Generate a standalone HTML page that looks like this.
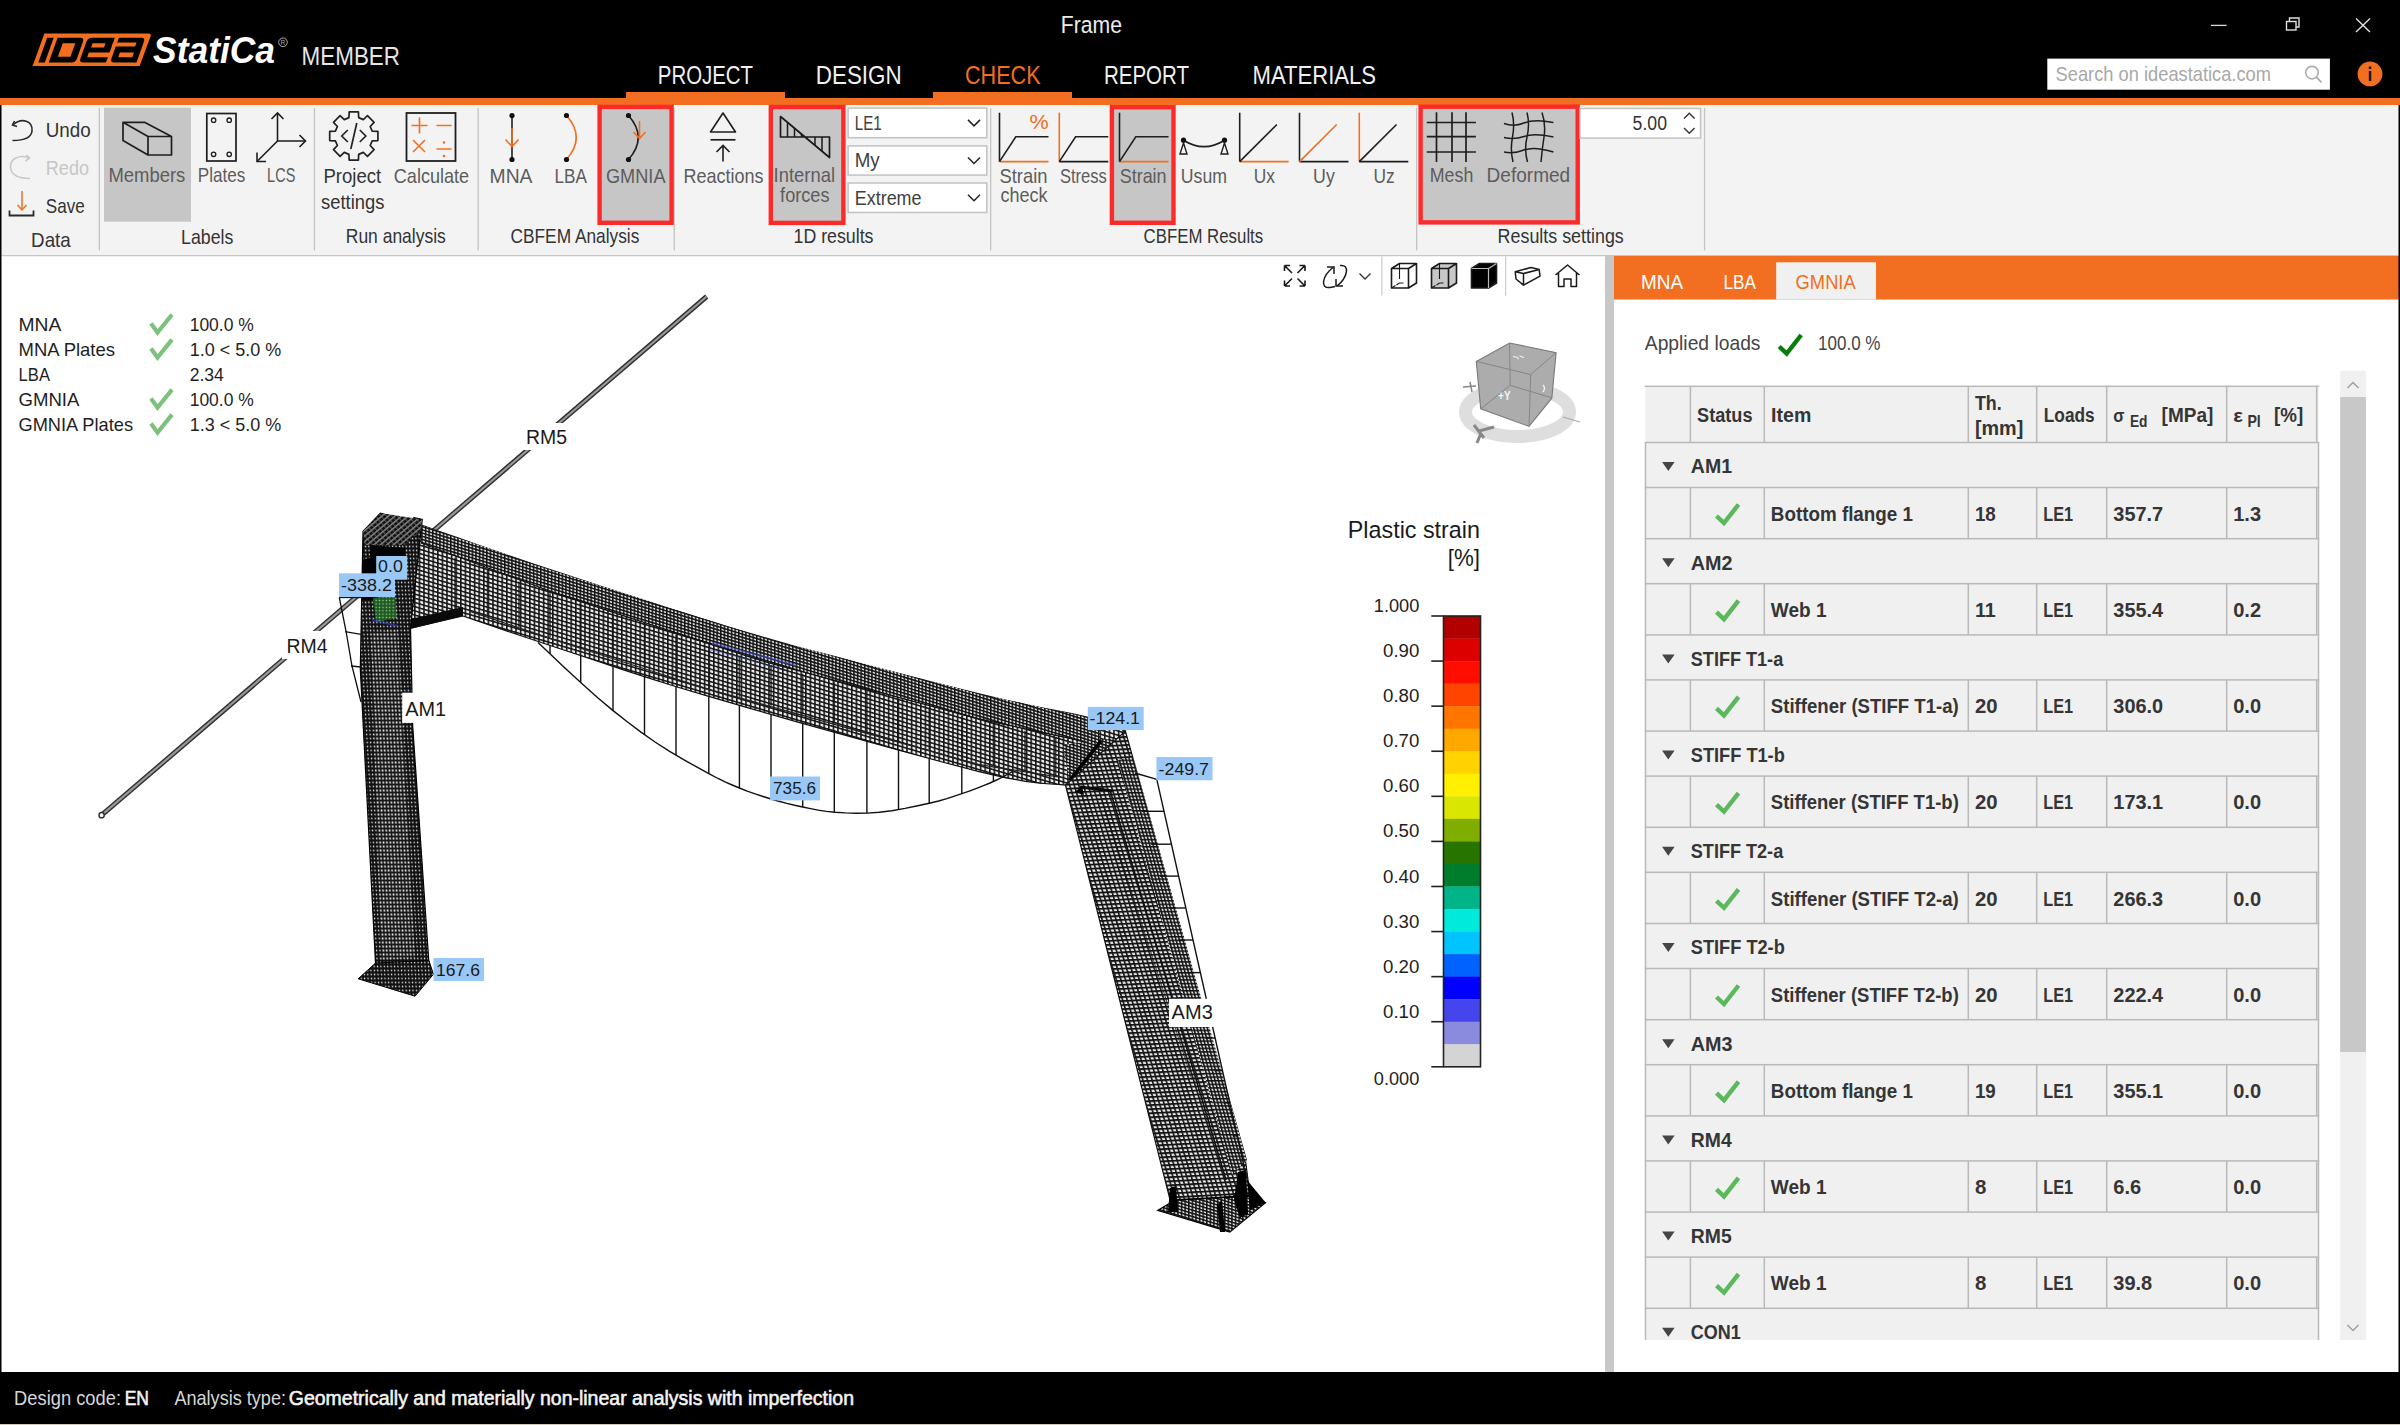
<!DOCTYPE html>
<html><head><meta charset="utf-8"><title>Frame - IDEA StatiCa Member</title>
<style>
html,body{margin:0;padding:0;width:2400px;height:1425px;overflow:hidden;background:#fff;font-family:"Liberation Sans",sans-serif;}
svg{position:absolute;left:0;top:0;display:block}
</style></head>
<body>
<svg width="2400" height="1425" viewBox="0 0 2400 1425">
<rect x="0" y="0" width="2400" height="98" fill="#000" />
<rect x="0" y="98" width="2400" height="7" fill="#f26f21" />
<rect x="626" y="92" width="159" height="6" fill="#f26f21" />
<rect x="933" y="92" width="139" height="6" fill="#f26f21" />
<rect x="1" y="105" width="2398" height="150" fill="#f3f3f3" />
<rect x="1" y="255" width="2398" height="1.5" fill="#c6c6c6" />
<rect x="1" y="256.5" width="1604" height="1115.5" fill="#fff" />
<rect x="1605" y="256" width="9" height="1116" fill="#c8c8c8" />
<rect x="1614" y="256" width="785" height="1116" fill="#fff" />
<rect x="1614" y="256" width="785" height="43.5" fill="#f26f21" />
<rect x="0" y="1372" width="2400" height="53" fill="#000" />
<rect x="0" y="105" width="1.5" height="1267" fill="#000" />
<rect x="2398.5" y="105" width="1.5" height="1267" fill="#000" />
<rect x="0" y="1424" width="2400" height="1" fill="#d2cab6" />
<text x="1060.8" y="32.6" font-family="Liberation Sans" font-size="23.69" font-weight="normal" fill="#ececec" textLength="61.2" lengthAdjust="spacingAndGlyphs" >Frame</text>
<text x="301.6" y="64.7" font-family="Liberation Sans" font-size="25.00" font-weight="normal" fill="#e6e6e6" textLength="98.4" lengthAdjust="spacingAndGlyphs" >MEMBER</text>
<text x="657.8" y="83.8" font-family="Liberation Sans" font-size="25.87" font-weight="normal" fill="#f0f0f0" textLength="95.2" lengthAdjust="spacingAndGlyphs" >PROJECT</text>
<text x="815.8" y="83.8" font-family="Liberation Sans" font-size="25.87" font-weight="normal" fill="#f0f0f0" textLength="85.9" lengthAdjust="spacingAndGlyphs" >DESIGN</text>
<text x="965.0" y="83.8" font-family="Liberation Sans" font-size="25.87" font-weight="normal" fill="#f26f21" textLength="75.6" lengthAdjust="spacingAndGlyphs" >CHECK</text>
<text x="1103.9" y="83.8" font-family="Liberation Sans" font-size="25.87" font-weight="normal" fill="#f0f0f0" textLength="85.1" lengthAdjust="spacingAndGlyphs" >REPORT</text>
<text x="1252.5" y="83.8" font-family="Liberation Sans" font-size="25.87" font-weight="normal" fill="#f0f0f0" textLength="123.5" lengthAdjust="spacingAndGlyphs" >MATERIALS</text>
<rect x="2047.3" y="58.6" width="282.6" height="31.1" fill="#fff" />
<text x="2055.6" y="81.0" font-family="Liberation Sans" font-size="19.48" font-weight="normal" fill="#a8a8a8" textLength="215.4" lengthAdjust="spacingAndGlyphs" >Search on ideastatica.com</text>
<circle cx="2312" cy="72.6" r="6.3" fill="none" stroke="#a8a8a8" stroke-width="1.5"/>
<line x1="2316.5" y1="77.2" x2="2321.5" y2="82.5" stroke="#a8a8a8" stroke-width="1.8" />
<circle cx="2370" cy="73.9" r="12.4" fill="#f26f21"/>
<rect x="2368.8" y="71" width="2.5" height="10" fill="#1a1a1a" />
<rect x="2368.8" y="66.5" width="2.5" height="2.5" fill="#1a1a1a" />
<line x1="2211" y1="25.4" x2="2226.6" y2="25.4" stroke="#d8d8d8" stroke-width="1.3" />
<rect x="2286.5" y="21.5" width="9.5" height="8.5" fill="none" stroke="#e0e0e0" stroke-width="1.4"/>
<path d="M2289.5,21.5 V18 H2299 V27 H2296" fill="none" stroke="#e0e0e0" stroke-width="1.4" />
<line x1="2356" y1="18.5" x2="2370" y2="32" stroke="#e0e0e0" stroke-width="1.4" />
<line x1="2370" y1="18.5" x2="2356" y2="32" stroke="#e0e0e0" stroke-width="1.4" />
<text x="14.1" y="1404.8" font-family="Liberation Sans" font-size="19.48" font-weight="normal" fill="#d6d6d6" textLength="106.9" lengthAdjust="spacingAndGlyphs" >Design code:</text>
<text x="124.7" y="1404.8" font-family="Liberation Sans" font-size="19.48" font-weight="normal" fill="#f4f4f4" textLength="24.3" lengthAdjust="spacingAndGlyphs" stroke="#f4f4f4" stroke-width="0.55">EN</text>
<text x="174.4" y="1404.8" font-family="Liberation Sans" font-size="19.48" font-weight="normal" fill="#d6d6d6" textLength="111.6" lengthAdjust="spacingAndGlyphs" >Analysis type:</text>
<text x="288.8" y="1404.8" font-family="Liberation Sans" font-size="19.48" font-weight="normal" fill="#f4f4f4" textLength="565.2" lengthAdjust="spacingAndGlyphs" stroke="#f4f4f4" stroke-width="0.55">Geometrically and materially non-linear analysis with imperfection</text>
<g transform="translate(0,62.4) skewX(-19.8) translate(0,-62.4)">
<path d="M33.9,33.4 H138 Q141.5,33.4 141.2,37 L140.9,65.9 H33.9 Z" fill="#f26f21"/>
<rect x="38.3" y="37.75" width="6.5" height="24.65" fill="#000" />
<path d="M48.7,37.75 H71.5 Q75.5,37.75 75.5,41.75 V58.4 Q75.5,62.4 71.5,62.4 H48.7 Z" fill="#000"/>
<rect x="55.8" y="43.2" width="12.6" height="13.5" fill="#f26f21" />
<path d="M83,37.75 H106 V62.4 H83 Q79,62.4 79,58.4 V41.75 Q79,37.75 83,37.75 Z" fill="#000"/>
<rect x="85.7" y="43.2" width="12.9" height="4.3" fill="#f26f21" />
<rect x="85.3" y="52.6" width="25" height="4.65" fill="#f26f21" />
<path d="M110,37.75 H132.5 Q136.5,37.75 136.5,41.75 V62.4 H114 Q110,62.4 110,58.4 Z" fill="#000"/>
<rect x="106" y="42.6" width="23.4" height="3.8" fill="#f26f21" />
<rect x="116.3" y="52.4" width="14.1" height="4.85" fill="#f26f21" />
</g>
<text x="153.1" y="62.5" font-family="Liberation Sans" font-size="36.34" font-weight="bold" fill="#fff" textLength="121.9" lengthAdjust="spacingAndGlyphs" font-style="italic">StatiCa</text>
<circle cx="283" cy="42.3" r="4.3" fill="none" stroke="#aaa" stroke-width="1"/>
<text x="280.6" y="45.2" font-family="Liberation Sans" font-size="6.5" fill="#aaa">R</text>
<rect x="98.7" y="108" width="1.3" height="142.5" fill="#c4c4c4" />
<rect x="313.79999999999995" y="108" width="1.3" height="142.5" fill="#c4c4c4" />
<rect x="477.5" y="108" width="1.3" height="142.5" fill="#c4c4c4" />
<rect x="673.6" y="108" width="1.3" height="142.5" fill="#c4c4c4" />
<rect x="990.0" y="108" width="1.3" height="142.5" fill="#c4c4c4" />
<rect x="1416.0" y="108" width="1.3" height="142.5" fill="#c4c4c4" />
<rect x="1703.9" y="108" width="1.3" height="142.5" fill="#c4c4c4" />
<rect x="104" y="107.7" width="87" height="114" fill="#c6c6c6" />
<rect x="597.4" y="104.7" width="76.39999999999998" height="120.3" fill="#fe2a2a" /><rect x="601.8" y="109.10000000000001" width="67.59999999999998" height="111.5" fill="#c6c6c6" />
<rect x="768.6" y="104.8" width="77.0" height="120.3" fill="#fe2a2a" /><rect x="773.0" y="109.2" width="68.2" height="111.5" fill="#c6c6c6" />
<rect x="1109.7" y="105" width="66.0" height="120" fill="#fe2a2a" /><rect x="1114.1000000000001" y="109.4" width="57.2" height="111.2" fill="#c6c6c6" />
<rect x="1418.4" y="104.5" width="161.5" height="120.1" fill="#fe2a2a" /><rect x="1422.8000000000002" y="108.9" width="152.7" height="111.3" fill="#c6c6c6" />
<path d="M14.5,121 L12.5,125 L17,126.5" fill="none" stroke="#2a2a2a" stroke-width="1.6" stroke-linejoin="miter"/>
<path d="M12.8,125 C22,117 33,121 32,131 C31.5,137 26,140.5 12.5,140.5" fill="none" stroke="#2a2a2a" stroke-width="1.6" />
<text x="45.8" y="137.3" font-family="Liberation Sans" font-size="19.48" font-weight="normal" fill="#333" textLength="44.9" lengthAdjust="spacingAndGlyphs" >Undo</text>
<path d="M26,155 L29.5,158 L25.5,161" fill="none" stroke="#c8c8c8" stroke-width="1.6" />
<path d="M29.3,158 C19,154 10,159 10.5,167 C11,174 16,178.5 30,178.5" fill="none" stroke="#c8c8c8" stroke-width="1.6" />
<text x="45.8" y="174.7" font-family="Liberation Sans" font-size="19.48" font-weight="normal" fill="#c6c6c6" textLength="43.2" lengthAdjust="spacingAndGlyphs" >Redo</text>
<line x1="22" y1="191" x2="22" y2="209.5" stroke="#f26f21" stroke-width="1.5" />
<path d="M17.5,205 L22,210 L26.5,205" fill="none" stroke="#f26f21" stroke-width="1.5" />
<path d="M9.5,210.5 V215.5 H33.5 V210.5" fill="none" stroke="#2a2a2a" stroke-width="1.8" />
<text x="45.8" y="212.7" font-family="Liberation Sans" font-size="19.48" font-weight="normal" fill="#333" textLength="38.9" lengthAdjust="spacingAndGlyphs" >Save</text>
<text x="31.1" y="247.3" font-family="Liberation Sans" font-size="19.48" font-weight="normal" fill="#333" textLength="39.6" lengthAdjust="spacingAndGlyphs" >Data</text>
<path d="M123,122.3 L144.5,122.3 L171.5,136.5 L171.5,155 L148,155 L123,140.5 Z M123,122.3 L148,136.5 L171.5,136.5 M148,136.5 L148,155" fill="none" stroke="#1e1e1e" stroke-width="1.7" stroke-linejoin="round"/>
<text x="108.4" y="182.0" font-family="Liberation Sans" font-size="19.48" font-weight="normal" fill="#5c5c5c" textLength="76.9" lengthAdjust="spacingAndGlyphs" >Members</text>
<rect x="206.8" y="113.5" width="29.2" height="47.5" fill="none" stroke="#1e1e1e" stroke-width="1.7"/>
<circle cx="213.6" cy="120.2" r="2.2" fill="none" stroke="#1e1e1e" stroke-width="1.3"/>
<circle cx="229.2" cy="120.2" r="2.2" fill="none" stroke="#1e1e1e" stroke-width="1.3"/>
<circle cx="213.6" cy="154.3" r="2.2" fill="none" stroke="#1e1e1e" stroke-width="1.3"/>
<circle cx="229.2" cy="154.3" r="2.2" fill="none" stroke="#1e1e1e" stroke-width="1.3"/>
<text x="197.8" y="182.0" font-family="Liberation Sans" font-size="19.48" font-weight="normal" fill="#5c5c5c" textLength="47.5" lengthAdjust="spacingAndGlyphs" >Plates</text>
<path d="M277.5,113.5 V141 H305 M277.5,141 L257.5,161" fill="none" stroke="#1e1e1e" stroke-width="1.6" />
<path d="M271.5,119 L277.5,113 L283.5,119 M299.5,135 L305.5,141 L299.5,147 M257,152.5 V161.5 H266" fill="none" stroke="#1e1e1e" stroke-width="1.6" />
<text x="267.1" y="182.0" font-family="Liberation Sans" font-size="19.48" font-weight="normal" fill="#5c5c5c" textLength="28.2" lengthAdjust="spacingAndGlyphs" >LCS</text>
<text x="181.1" y="244.0" font-family="Liberation Sans" font-size="19.48" font-weight="normal" fill="#333" textLength="52.2" lengthAdjust="spacingAndGlyphs" >Labels</text>
<polygon points="377.9,131.4 377.9,140.6 372.2,140.9 370.2,145.5 374.1,149.7 367.5,156.3 363.3,152.4 358.7,154.4 358.4,160.1 349.2,160.1 348.9,154.4 344.3,152.4 340.1,156.3 333.5,149.7 337.4,145.5 335.4,140.9 329.7,140.6 329.7,131.4 335.4,131.1 337.4,126.5 333.5,122.3 340.1,115.7 344.3,119.6 348.9,117.6 349.2,111.9 358.4,111.9 358.7,117.6 363.3,119.6 367.5,115.7 374.1,122.3 370.2,126.5 372.2,131.1" fill="none" stroke="#222" stroke-width="1.7" stroke-linejoin="round"/>
<path d="M347.8,130 L341.8,136 L347.8,142 M359.8,130 L365.8,136 L359.8,142 M356.8,123 L350.8,149" fill="none" stroke="#222" stroke-width="1.7" />
<text x="323.4" y="183.0" font-family="Liberation Sans" font-size="19.48" font-weight="normal" fill="#333" textLength="57.8" lengthAdjust="spacingAndGlyphs" >Project</text>
<text x="321.0" y="208.5" font-family="Liberation Sans" font-size="19.48" font-weight="normal" fill="#333" textLength="63.4" lengthAdjust="spacingAndGlyphs" >settings</text>
<rect x="406.5" y="113" width="49" height="48" fill="none" stroke="#1e1e1e" stroke-width="1.8"/>
<path d="M419.5,117.5 V133.5 M411.5,125.5 H427.5 M436.5,125.5 H451.5 M413,140 L425,152 M425,140 L413,152 M436.5,149 H451.5" fill="none" stroke="#f26f21" stroke-width="1.6" />
<circle cx="444" cy="142.5" r="1.3" fill="#f26f21"/><circle cx="444" cy="156" r="1.3" fill="#f26f21"/>
<text x="393.8" y="182.5" font-family="Liberation Sans" font-size="19.48" font-weight="normal" fill="#5c5c5c" textLength="75.3" lengthAdjust="spacingAndGlyphs" >Calculate</text>
<text x="345.8" y="243.3" font-family="Liberation Sans" font-size="19.48" font-weight="normal" fill="#333" textLength="100.0" lengthAdjust="spacingAndGlyphs" >Run analysis</text>
<line x1="512" y1="115.5" x2="512" y2="159.5" stroke="#1e1e1e" stroke-width="1.6" />
<line x1="512" y1="128" x2="512" y2="146" stroke="#f26f21" stroke-width="1.6" />
<path d="M505.5,139.5 L512,146.5 L518.5,139.5" fill="none" stroke="#f26f21" stroke-width="1.6" />
<circle cx="512" cy="115.5" r="2.6" fill="#111"/><circle cx="512" cy="159.5" r="2.6" fill="#111"/>
<text x="489.6" y="182.5" font-family="Liberation Sans" font-size="19.48" font-weight="normal" fill="#5c5c5c" textLength="42.9" lengthAdjust="spacingAndGlyphs" >MNA</text>
<path d="M566.5,115.5 Q586,137.5 566.5,159.5" fill="none" stroke="#f26f21" stroke-width="1.6" />
<circle cx="566.5" cy="115.5" r="2.6" fill="#111"/><circle cx="566.5" cy="159.5" r="2.6" fill="#111"/>
<text x="554.5" y="182.5" font-family="Liberation Sans" font-size="19.48" font-weight="normal" fill="#5c5c5c" textLength="32.5" lengthAdjust="spacingAndGlyphs" >LBA</text>
<path d="M628.5,115.5 Q648,137.5 628.5,159.5" fill="none" stroke="#1e1e1e" stroke-width="1.6" />
<circle cx="628.5" cy="115.5" r="2.6" fill="#111"/><circle cx="628.5" cy="159.5" r="2.6" fill="#111"/>
<path d="M639.5,121 V138 M633.5,132 L639.5,138.5 L645.5,132" fill="none" stroke="#f26f21" stroke-width="1.6" />
<text x="606.0" y="182.5" font-family="Liberation Sans" font-size="19.48" font-weight="normal" fill="#5c5c5c" textLength="59.5" lengthAdjust="spacingAndGlyphs" >GMNIA</text>
<text x="510.5" y="243.3" font-family="Liberation Sans" font-size="19.48" font-weight="normal" fill="#333" textLength="128.8" lengthAdjust="spacingAndGlyphs" >CBFEM Analysis</text>
<path d="M710.5,132 L723,113 L735.5,132 Z" fill="none" stroke="#1e1e1e" stroke-width="1.6" stroke-linejoin="round"/>
<line x1="710.5" y1="139.8" x2="735.5" y2="139.8" stroke="#1e1e1e" stroke-width="1.7" />
<path d="M723,161.5 V146.5 M716.5,152 L723,145.5 L729.5,152" fill="none" stroke="#1e1e1e" stroke-width="1.6" />
<text x="683.5" y="182.5" font-family="Liberation Sans" font-size="19.48" font-weight="normal" fill="#5c5c5c" textLength="80.0" lengthAdjust="spacingAndGlyphs" >Reactions</text>
<path d="M780.5,116.5 L829.5,157.5 V137 H780.5 Z" fill="none" stroke="#1a1a1a" stroke-width="1.7" stroke-linejoin="round"/>
<path d="M787.5,122.5 V137 M794.5,128.3 V137 M801.5,134 V137 M815,145.3 V137 M822,151.2 V137" fill="none" stroke="#1a1a1a" stroke-width="1.5" />
<text x="773.6" y="181.8" font-family="Liberation Sans" font-size="19.48" font-weight="normal" fill="#5c5c5c" textLength="61.4" lengthAdjust="spacingAndGlyphs" >Internal</text>
<text x="780.1" y="201.7" font-family="Liberation Sans" font-size="19.48" font-weight="normal" fill="#5c5c5c" textLength="49.4" lengthAdjust="spacingAndGlyphs" >forces</text>
<rect x="848.1" y="108.1" width="138.7" height="29.599999999999994" fill="#fff" stroke="#c2c2c2" stroke-width="1.5"/>
<text x="854.7" y="129.6" font-family="Liberation Sans" font-size="19.48" font-weight="normal" fill="#404040" textLength="27.0" lengthAdjust="spacingAndGlyphs" >LE1</text>
<path d="M968,119.89999999999999 L974,125.89999999999999 L980,119.89999999999999" fill="none" stroke="#222" stroke-width="1.5" />
<rect x="848.1" y="145.9" width="138.7" height="29.19999999999999" fill="#fff" stroke="#c2c2c2" stroke-width="1.5"/>
<text x="854.7" y="167.4" font-family="Liberation Sans" font-size="19.48" font-weight="normal" fill="#404040" textLength="25.0" lengthAdjust="spacingAndGlyphs" >My</text>
<path d="M968,157.5 L974,163.5 L980,157.5" fill="none" stroke="#222" stroke-width="1.5" />
<rect x="848.1" y="183.0" width="138.7" height="29.5" fill="#fff" stroke="#c2c2c2" stroke-width="1.5"/>
<text x="854.7" y="204.8" font-family="Liberation Sans" font-size="19.48" font-weight="normal" fill="#404040" textLength="66.9" lengthAdjust="spacingAndGlyphs" >Extreme</text>
<path d="M968,194.75 L974,200.75 L980,194.75" fill="none" stroke="#222" stroke-width="1.5" />
<text x="793.5" y="243.0" font-family="Liberation Sans" font-size="19.48" font-weight="normal" fill="#333" textLength="80.0" lengthAdjust="spacingAndGlyphs" >1D results</text>
<line x1="999.5" y1="112.7" x2="999.5" y2="161.6" stroke="#1e1e1e" stroke-width="1.6" />
<line x1="999.5" y1="161.6" x2="1048.5" y2="161.6" stroke="#f26f21" stroke-width="1.6" />
<polyline points="999.5,161.6 1015.8,136.8 1048.5,136.8" fill="none" stroke="#1e1e1e" stroke-width="1.6" />
<text x="1029.4" y="129.0" font-family="Liberation Sans" font-size="19.50" font-weight="normal" fill="#f26f21" textLength="19.2" lengthAdjust="spacingAndGlyphs" >%</text>
<text x="999.5" y="182.5" font-family="Liberation Sans" font-size="19.48" font-weight="normal" fill="#5c5c5c" textLength="48.0" lengthAdjust="spacingAndGlyphs" >Strain</text>
<text x="1000.4" y="202.4" font-family="Liberation Sans" font-size="19.48" font-weight="normal" fill="#5c5c5c" textLength="47.1" lengthAdjust="spacingAndGlyphs" >check</text>
<line x1="1059.3" y1="112.7" x2="1059.3" y2="161.6" stroke="#f26f21" stroke-width="1.6" />
<line x1="1059.3" y1="161.6" x2="1108.3" y2="161.6" stroke="#1e1e1e" stroke-width="1.6" />
<polyline points="1059.3,161.6 1075.6,136.8 1108.3,136.8" fill="none" stroke="#1e1e1e" stroke-width="1.6" />
<text x="1059.9" y="182.5" font-family="Liberation Sans" font-size="19.48" font-weight="normal" fill="#5c5c5c" textLength="46.9" lengthAdjust="spacingAndGlyphs" >Stress</text>
<line x1="1119.5" y1="112.7" x2="1119.5" y2="161.6" stroke="#1e1e1e" stroke-width="1.6" />
<line x1="1119.5" y1="161.6" x2="1168.5" y2="161.6" stroke="#f26f21" stroke-width="1.6" />
<polyline points="1119.5,161.6 1135.8,136.8 1168.5,136.8" fill="none" stroke="#1e1e1e" stroke-width="1.6" />
<text x="1119.7" y="182.5" font-family="Liberation Sans" font-size="19.48" font-weight="normal" fill="#5c5c5c" textLength="46.9" lengthAdjust="spacingAndGlyphs" >Strain</text>
<path d="M1183.5,140.2 Q1204,153 1224.5,140.2" fill="none" stroke="#1e1e1e" stroke-width="1.6" />
<circle cx="1183.5" cy="140.2" r="2.6" fill="#111"/><circle cx="1224.5" cy="140.2" r="2.6" fill="#111"/>
<path d="M1183.5,143 L1180,154 H1187 Z M1224.5,143 L1221,154 H1228 Z" fill="none" stroke="#1e1e1e" stroke-width="1.4" />
<text x="1180.8" y="182.5" font-family="Liberation Sans" font-size="19.48" font-weight="normal" fill="#5c5c5c" textLength="46.2" lengthAdjust="spacingAndGlyphs" >Usum</text>
<line x1="1239.7" y1="112.7" x2="1239.7" y2="161.6" stroke="#1e1e1e" stroke-width="1.6" />
<line x1="1239.7" y1="161.6" x2="1288.7" y2="161.6" stroke="#f26f21" stroke-width="1.6" />
<line x1="1239.7" y1="161.6" x2="1276.9" y2="124.5" stroke="#1e1e1e" stroke-width="1.6" />
<text x="1253.8" y="182.5" font-family="Liberation Sans" font-size="19.48" font-weight="normal" fill="#5c5c5c" textLength="21.2" lengthAdjust="spacingAndGlyphs" >Ux</text>
<line x1="1299.5" y1="112.7" x2="1299.5" y2="161.6" stroke="#1e1e1e" stroke-width="1.6" />
<line x1="1299.5" y1="161.6" x2="1348.5" y2="161.6" stroke="#1e1e1e" stroke-width="1.6" />
<line x1="1299.5" y1="161.6" x2="1336.7" y2="124.5" stroke="#f26f21" stroke-width="1.6" />
<text x="1313.1" y="182.5" font-family="Liberation Sans" font-size="19.48" font-weight="normal" fill="#5c5c5c" textLength="21.7" lengthAdjust="spacingAndGlyphs" >Uy</text>
<line x1="1359.3" y1="112.7" x2="1359.3" y2="161.6" stroke="#f26f21" stroke-width="1.6" />
<line x1="1359.3" y1="161.6" x2="1408.3" y2="161.6" stroke="#1e1e1e" stroke-width="1.6" />
<line x1="1359.3" y1="161.6" x2="1396.5" y2="124.5" stroke="#1e1e1e" stroke-width="1.6" />
<text x="1373.4" y="182.5" font-family="Liberation Sans" font-size="19.48" font-weight="normal" fill="#5c5c5c" textLength="21.2" lengthAdjust="spacingAndGlyphs" >Uz</text>
<text x="1143.6" y="243.2" font-family="Liberation Sans" font-size="19.48" font-weight="normal" fill="#333" textLength="119.6" lengthAdjust="spacingAndGlyphs" >CBFEM Results</text>
<line x1="1436.5" y1="112.3" x2="1436.5" y2="162" stroke="#1e1e1e" stroke-width="1.7" />
<line x1="1452" y1="112.3" x2="1452" y2="162" stroke="#1e1e1e" stroke-width="1.7" />
<line x1="1466" y1="112.3" x2="1466" y2="162" stroke="#1e1e1e" stroke-width="1.7" />
<line x1="1426.8" y1="122.5" x2="1475.9" y2="122.5" stroke="#1e1e1e" stroke-width="1.7" />
<line x1="1426.8" y1="136.6" x2="1475.9" y2="136.6" stroke="#1e1e1e" stroke-width="1.7" />
<line x1="1426.8" y1="152" x2="1475.9" y2="152" stroke="#1e1e1e" stroke-width="1.7" />
<path d="M1504,123.5 Q1514,127 1524,123 T1553.4,122.5 M1504,137.5 Q1514,140 1524,136.5 T1553.4,137 M1504,152 Q1514,154 1524,150 T1553.4,152 M1512,112.5 Q1515,124 1512.5,137 T1513,162 M1527,112.5 Q1530,124 1527,137 T1527.5,162 M1542,112.5 Q1546,124 1544,137 T1541,162" fill="none" stroke="#1e1e1e" stroke-width="1.5" />
<text x="1429.8" y="182.0" font-family="Liberation Sans" font-size="19.48" font-weight="normal" fill="#5c5c5c" textLength="43.5" lengthAdjust="spacingAndGlyphs" >Mesh</text>
<text x="1486.6" y="182.0" font-family="Liberation Sans" font-size="19.48" font-weight="normal" fill="#5c5c5c" textLength="83.6" lengthAdjust="spacingAndGlyphs" >Deformed</text>
<rect x="1580" y="108.5" width="120.6" height="29.6" fill="#fff" stroke="#c2c2c2" stroke-width="1.5"/>
<text x="1632.6" y="129.7" font-family="Liberation Sans" font-size="19.48" font-weight="normal" fill="#333" textLength="34.4" lengthAdjust="spacingAndGlyphs" >5.00</text>
<path d="M1684,118.5 L1689.3,113.3 L1694.6,118.5 M1684,128 L1689.3,133.3 L1694.6,128" fill="none" stroke="#333" stroke-width="1.4" />
<text x="1497.6" y="243.4" font-family="Liberation Sans" font-size="19.48" font-weight="normal" fill="#333" textLength="126.2" lengthAdjust="spacingAndGlyphs" >Results settings</text>
<rect x="1381.2" y="256.5" width="1.3" height="39" fill="#d0d0d0" />
<rect x="1505" y="256.5" width="1.3" height="39" fill="#d0d0d0" />
<path d="M1284.5,265.5 L1292,273 M1284.5,265.5 H1290 M1284.5,265.5 V271 M1305,265.5 L1297.5,273 M1305,265.5 H1299.5 M1305,265.5 V271 M1284.5,286 L1292,278.5 M1284.5,286 H1290 M1284.5,286 V280.5 M1305,286 L1297.5,278.5 M1305,286 H1299.5 M1305,286 V280.5" fill="none" stroke="#1a1a1a" stroke-width="1.6" />
<path d="M1333,267.5 C1322,276 1320,289 1330,287.5 C1333,287 1335,286.5 1335,286.5" fill="none" stroke="#1a1a1a" stroke-width="1.5" />
<path d="M1327,267 H1334 V274" fill="none" stroke="#1a1a1a" stroke-width="1.5" />
<path d="M1337,286 C1348,277 1350,264 1340,265.5" fill="none" stroke="#1a1a1a" stroke-width="1.5" />
<path d="M1343,286 H1336 V279" fill="none" stroke="#1a1a1a" stroke-width="1.5" />
<path d="M1359.5,273.5 L1365,279 L1370.5,273.5" fill="none" stroke="#333" stroke-width="1.3" />
<path d="M1391.5,268.5 H1408.5 V288 H1391.5 Z M1391.5,268.5 L1399.5,263.5 H1416.5 V283 L1408.5,288 M1408.5,268.5 L1416.5,263.5" fill="none" stroke="#1a1a1a" stroke-width="1.6" stroke-linejoin="round"/>
<path d="M1399.5,263.5 V279 M1399.5,283 H1403.5 M1391.5,288 L1395.5,285.5 M1399.5,283 L1396.5,285" fill="none" stroke="#1a1a1a" stroke-width="1.1" />
<polygon points="1431.5,268.5 1439.5,263.5 1456.5,263.5 1456.5,283.0 1448.5,288.0 1431.5,288.0" fill="#c8c8c8" stroke="none" stroke-width="1" />
<path d="M1431.5,268.5 H1448.5 V288 H1431.5 Z M1431.5,268.5 L1439.5,263.5 H1456.5 V283 L1448.5,288 M1448.5,268.5 L1456.5,263.5" fill="none" stroke="#1a1a1a" stroke-width="1.6" stroke-linejoin="round"/>
<path d="M1439.5,263.5 V279 M1439.5,283 H1443.5 M1431.5,288 L1435.5,285.5 M1439.5,283 L1436.5,285" fill="none" stroke="#1a1a1a" stroke-width="1.1" />
<polygon points="1471.5,268.5 1479.5,263.5 1496.5,263.5 1496.5,283.0 1488.5,288.0 1471.5,288.0" fill="#000" stroke="#1a1a1a" stroke-width="1.6" stroke-linejoin="round"/>
<path d="M1471.5,268.5 H1488.5 V288 M1488.5,268.5 L1496.5,263.5" fill="none" stroke="#bbb" stroke-width="1.2" />
<path d="M1515.2,271.7 L1516,279 L1523.5,285.2 L1540,276.2 L1539.2,269.5 L1531,267.5 Z M1515.2,271.7 L1523.5,273.5 L1539.2,269.5 M1523.5,273.5 V285.2" fill="none" stroke="#1a1a1a" stroke-width="1.5" stroke-linejoin="round"/>
<path d="M1555.5,275 L1567.5,265 L1579.5,275 M1558.5,272.5 V286.5 H1564 V279 H1571 V286.5 H1576.5 V272.5" fill="none" stroke="#1a1a1a" stroke-width="1.5" stroke-linejoin="round"/>
<text x="18.5" y="330.6" font-family="Liberation Sans" font-size="19.04" font-weight="normal" fill="#1f1f1f" textLength="42.8" lengthAdjust="spacingAndGlyphs" >MNA</text>
<text x="189.7" y="330.6" font-family="Liberation Sans" font-size="19.04" font-weight="normal" fill="#1f1f1f" textLength="64.1" lengthAdjust="spacingAndGlyphs" >100.0 %</text>
<path d="M151,323.6 L157.5,332.6 L172,314.6" fill="none" stroke="#7cc17c" stroke-width="4.2" stroke-linejoin="miter" stroke-linecap="butt"/>
<text x="18.5" y="355.6" font-family="Liberation Sans" font-size="19.04" font-weight="normal" fill="#1f1f1f" textLength="96.5" lengthAdjust="spacingAndGlyphs" >MNA Plates</text>
<text x="189.7" y="355.6" font-family="Liberation Sans" font-size="19.04" font-weight="normal" fill="#1f1f1f" textLength="91.6" lengthAdjust="spacingAndGlyphs" >1.0 &lt; 5.0 %</text>
<path d="M151,348.6 L157.5,357.6 L172,339.6" fill="none" stroke="#7cc17c" stroke-width="4.2" stroke-linejoin="miter" stroke-linecap="butt"/>
<text x="18.5" y="380.6" font-family="Liberation Sans" font-size="19.04" font-weight="normal" fill="#1f1f1f" textLength="31.5" lengthAdjust="spacingAndGlyphs" >LBA</text>
<text x="189.7" y="380.6" font-family="Liberation Sans" font-size="19.04" font-weight="normal" fill="#1f1f1f" textLength="34.1" lengthAdjust="spacingAndGlyphs" >2.34</text>
<text x="18.5" y="405.6" font-family="Liberation Sans" font-size="19.04" font-weight="normal" fill="#1f1f1f" textLength="60.9" lengthAdjust="spacingAndGlyphs" >GMNIA</text>
<text x="189.7" y="405.6" font-family="Liberation Sans" font-size="19.04" font-weight="normal" fill="#1f1f1f" textLength="64.1" lengthAdjust="spacingAndGlyphs" >100.0 %</text>
<path d="M151,398.6 L157.5,407.6 L172,389.6" fill="none" stroke="#7cc17c" stroke-width="4.2" stroke-linejoin="miter" stroke-linecap="butt"/>
<text x="18.5" y="430.6" font-family="Liberation Sans" font-size="19.04" font-weight="normal" fill="#1f1f1f" textLength="114.5" lengthAdjust="spacingAndGlyphs" >GMNIA Plates</text>
<text x="189.7" y="430.6" font-family="Liberation Sans" font-size="19.04" font-weight="normal" fill="#1f1f1f" textLength="91.6" lengthAdjust="spacingAndGlyphs" >1.3 &lt; 5.0 %</text>
<path d="M151,423.6 L157.5,432.6 L172,414.6" fill="none" stroke="#7cc17c" stroke-width="4.2" stroke-linejoin="miter" stroke-linecap="butt"/>
<text x="1347.8" y="538.0" font-family="Liberation Sans" font-size="24.27" font-weight="normal" fill="#1a1a1a" textLength="132.2" lengthAdjust="spacingAndGlyphs" >Plastic strain</text>
<text x="1447.8" y="566.0" font-family="Liberation Sans" font-size="24.27" font-weight="normal" fill="#1a1a1a" textLength="32.2" lengthAdjust="spacingAndGlyphs" >[%]</text>
<rect x="1443.5" y="616.0" width="37" height="22.84" fill="#b00000" />
<rect x="1443.5" y="638.54" width="37" height="22.84" fill="#dc0000" />
<rect x="1443.5" y="661.08" width="37" height="22.84" fill="#ff0d00" />
<rect x="1443.5" y="683.62" width="37" height="22.84" fill="#ff4400" />
<rect x="1443.5" y="706.16" width="37" height="22.84" fill="#ff7500" />
<rect x="1443.5" y="728.7" width="37" height="22.84" fill="#ffa800" />
<rect x="1443.5" y="751.24" width="37" height="22.84" fill="#ffd200" />
<rect x="1443.5" y="773.78" width="37" height="22.84" fill="#ffef00" />
<rect x="1443.5" y="796.3199999999999" width="37" height="22.84" fill="#d9e600" />
<rect x="1443.5" y="818.86" width="37" height="22.84" fill="#80ae00" />
<rect x="1443.5" y="841.4" width="37" height="22.84" fill="#287400" />
<rect x="1443.5" y="863.94" width="37" height="22.84" fill="#007d2c" />
<rect x="1443.5" y="886.48" width="37" height="22.84" fill="#00b48a" />
<rect x="1443.5" y="909.02" width="37" height="22.84" fill="#00eadb" />
<rect x="1443.5" y="931.56" width="37" height="22.84" fill="#00c3ff" />
<rect x="1443.5" y="954.0999999999999" width="37" height="22.84" fill="#0062ff" />
<rect x="1443.5" y="976.64" width="37" height="22.84" fill="#0000ff" />
<rect x="1443.5" y="999.1800000000001" width="37" height="22.84" fill="#4545ed" />
<rect x="1443.5" y="1021.72" width="37" height="22.84" fill="#8a8ade" />
<rect x="1443.5" y="1044.26" width="37" height="22.84" fill="#d4d4d4" />
<rect x="1443.5" y="616" width="37" height="450.79999999999995" fill="none" stroke="#222" stroke-width="1.6"/>
<line x1="1431.3" y1="616.0" x2="1443.5" y2="616.0" stroke="#222" stroke-width="1.6" />
<text x="1373.8" y="611.6" font-family="Liberation Sans" font-size="18.75" font-weight="normal" fill="#222" textLength="45.5" lengthAdjust="spacingAndGlyphs" >1.000</text>
<line x1="1431.3" y1="661.08" x2="1443.5" y2="661.08" stroke="#222" stroke-width="1.6" />
<text x="1383.1" y="657.1" font-family="Liberation Sans" font-size="18.75" font-weight="normal" fill="#222" textLength="36.2" lengthAdjust="spacingAndGlyphs" >0.90</text>
<line x1="1431.3" y1="706.16" x2="1443.5" y2="706.16" stroke="#222" stroke-width="1.6" />
<text x="1383.1" y="702.2" font-family="Liberation Sans" font-size="18.75" font-weight="normal" fill="#222" textLength="36.2" lengthAdjust="spacingAndGlyphs" >0.80</text>
<line x1="1431.3" y1="751.24" x2="1443.5" y2="751.24" stroke="#222" stroke-width="1.6" />
<text x="1383.1" y="747.2" font-family="Liberation Sans" font-size="18.75" font-weight="normal" fill="#222" textLength="36.2" lengthAdjust="spacingAndGlyphs" >0.70</text>
<line x1="1431.3" y1="796.3199999999999" x2="1443.5" y2="796.3199999999999" stroke="#222" stroke-width="1.6" />
<text x="1383.1" y="792.3" font-family="Liberation Sans" font-size="18.75" font-weight="normal" fill="#222" textLength="36.2" lengthAdjust="spacingAndGlyphs" >0.60</text>
<line x1="1431.3" y1="841.4" x2="1443.5" y2="841.4" stroke="#222" stroke-width="1.6" />
<text x="1383.1" y="837.4" font-family="Liberation Sans" font-size="18.75" font-weight="normal" fill="#222" textLength="36.2" lengthAdjust="spacingAndGlyphs" >0.50</text>
<line x1="1431.3" y1="886.48" x2="1443.5" y2="886.48" stroke="#222" stroke-width="1.6" />
<text x="1383.1" y="882.5" font-family="Liberation Sans" font-size="18.75" font-weight="normal" fill="#222" textLength="36.2" lengthAdjust="spacingAndGlyphs" >0.40</text>
<line x1="1431.3" y1="931.56" x2="1443.5" y2="931.56" stroke="#222" stroke-width="1.6" />
<text x="1383.1" y="927.6" font-family="Liberation Sans" font-size="18.75" font-weight="normal" fill="#222" textLength="36.2" lengthAdjust="spacingAndGlyphs" >0.30</text>
<line x1="1431.3" y1="976.64" x2="1443.5" y2="976.64" stroke="#222" stroke-width="1.6" />
<text x="1383.1" y="972.6" font-family="Liberation Sans" font-size="18.75" font-weight="normal" fill="#222" textLength="36.2" lengthAdjust="spacingAndGlyphs" >0.20</text>
<line x1="1431.3" y1="1021.72" x2="1443.5" y2="1021.72" stroke="#222" stroke-width="1.6" />
<text x="1383.1" y="1017.7" font-family="Liberation Sans" font-size="18.75" font-weight="normal" fill="#222" textLength="36.2" lengthAdjust="spacingAndGlyphs" >0.10</text>
<line x1="1431.3" y1="1066.8" x2="1443.5" y2="1066.8" stroke="#222" stroke-width="1.6" />
<text x="1373.8" y="1085.0" font-family="Liberation Sans" font-size="18.75" font-weight="normal" fill="#222" textLength="45.5" lengthAdjust="spacingAndGlyphs" >0.000</text>
<ellipse cx="1517.5" cy="412" rx="52" ry="24.5" fill="none" stroke="#dedede" stroke-width="13"/>
<polygon points="1476.3,361.4 1509.6,343.0 1556.1,352.6 1551.8,398.2 1529.0,426.3 1480.7,408.8" fill="#acacac" stroke="#7a7a7a" stroke-width="1.1" />
<path d="M1476.3,361.4 L1530.7,374.6 L1556.1,352.6 M1530.7,374.6 L1529,426.3 M1509.6,343 L1510.2,385.3 L1481.3,408.4 M1510.2,385.3 L1551,397.6" fill="none" stroke="#858585" stroke-width="1" />
<path d="M1474,425 L1484,438 M1479,431 L1494,427 M1481,433 L1477,443" fill="none" stroke="#888" stroke-width="3" />
<path d="M1463,387 L1476,386 M1470,382 L1472,392" fill="none" stroke="#888" stroke-width="1.5" />
<path d="M1563,417 L1580,422" fill="none" stroke="#aaa" stroke-width="1.2" />
<text x="1498.1" y="400.0" font-family="Liberation Sans" font-size="12.35" font-weight="bold" fill="#f4f4f4" textLength="12.4" lengthAdjust="spacingAndGlyphs" >+Y</text>
<path d="M1513,356.5 L1518,357.5 M1519.5,356 L1524,357.5 M1517.5,358.5 L1519,359" fill="none" stroke="#f4f4f4" stroke-width="1.1" />
<path d="M1543,385 Q1546,388 1543,392" fill="none" stroke="#f4f4f4" stroke-width="1.3" />
<defs>
<pattern id="pWeb" width="4.6" height="4.2" patternUnits="userSpaceOnUse" patternTransform="skewY(16.5)">
<rect width="4.6" height="4.2" fill="#ececec"/><rect x="0" y="0" width="1.6" height="4.2" fill="#151515"/><rect x="0" y="0" width="4.6" height="1.6" fill="#151515"/></pattern>
<pattern id="pFl" width="3.6" height="3.2" patternUnits="userSpaceOnUse" patternTransform="skewY(17)">
<rect width="3.6" height="3.2" fill="#e0e0e0"/><rect x="0" y="0" width="1.5" height="3.2" fill="#111"/><rect x="0" y="0" width="3.6" height="1.5" fill="#111"/></pattern>
<pattern id="pAM1" width="3.4" height="4" patternUnits="userSpaceOnUse" patternTransform="skewX(3.5)">
<rect width="3.4" height="4" fill="#111"/><rect x="1.6" y="1.6" width="1.2" height="1.8" fill="#e0e0e0"/></pattern>
<pattern id="pAM1b" width="3.4" height="4" patternUnits="userSpaceOnUse" patternTransform="skewX(3.5)">
<rect width="3.4" height="4" fill="#151515"/><rect x="1.4" y="1.4" width="1.6" height="2.2" fill="#e8e8e8"/></pattern>
<pattern id="pAM3" width="4.6" height="4" patternUnits="userSpaceOnUse" patternTransform="skewX(14.5) rotate(-3)">
<rect width="4.6" height="4" fill="#e8e8e8"/><rect x="0" y="0" width="1.65" height="4" fill="#141414"/><rect x="0" y="0" width="4.6" height="1.85" fill="#141414"/></pattern>
<pattern id="pAM3f" width="3.4" height="3.6" patternUnits="userSpaceOnUse" patternTransform="skewX(15.5)">
<rect width="3.4" height="3.6" fill="#e0e0e0"/><rect x="0" y="0" width="1.5" height="3.6" fill="#111"/><rect x="0" y="0" width="3.4" height="1.5" fill="#111"/></pattern>
<pattern id="pCap" width="4.2" height="4.2" patternUnits="userSpaceOnUse" patternTransform="rotate(-40)">
<rect width="4.2" height="4.2" fill="#111"/><rect x="0" y="2" width="4.2" height="0.9" fill="#ccc"/><rect x="2" y="0" width="0.7" height="4.2" fill="#777"/></pattern>
<pattern id="pGreen" width="3.4" height="3.4" patternUnits="userSpaceOnUse">
<rect width="3.4" height="3.4" fill="#1d5a1d"/><rect x="1.5" y="1.5" width="1.3" height="1.3" fill="#a8d0a8"/></pattern>
</defs>
<line x1="101.6" y1="815.2" x2="706.7" y2="296.5" stroke="#2e2e2e" stroke-width="5" />
<line x1="101.6" y1="815.2" x2="706.7" y2="296.5" stroke="#9a9a9a" stroke-width="2.2" />
<circle cx="101.6" cy="815.2" r="2.6" fill="#fff" stroke="#333" stroke-width="1.5"/>
<polygon points="410.0,528.0 421.0,525.0 435.4,530.0 454.8,536.8 478.0,545.0 504.0,554.0 531.7,563.5 560.0,572.9 589.6,582.6 621.4,593.1 654.9,604.0 689.6,615.1 724.8,626.0 760.0,636.4 796.8,646.8 836.0,657.4 875.8,667.8 914.2,677.7 949.6,686.6 980.0,694.2 1005.3,700.2 1026.9,704.8 1045.4,708.5 1061.4,711.6 1075.4,714.4 1088.0,717.3 1098.8,720.3 1107.1,723.1 1113.5,725.6 1118.3,727.8 1122.1,729.6 1125.4,731.0 1100.0,760.0 1065.5,785.1 1065.5,785.1 1058.3,784.4 1050.2,784.0 1039.7,783.2 1025.4,781.3 1006.0,777.8 980.0,771.8 944.1,762.5 898.8,750.2 848.4,736.2 797.0,721.8 749.1,708.1 708.8,696.4 676.3,686.7 648.2,677.9 623.5,669.9 601.2,662.5 580.4,655.5 560.0,648.7 539.7,642.0 520.2,635.5 502.2,629.4 486.2,623.9 473.0,619.4 463.0,616.0 410.5,628.0" fill="url(#pWeb)" stroke="#111" stroke-width="1.2" />
<polygon points="421.0,525.0 438.4,531.0 455.8,537.0 473.2,543.0 490.6,549.0 508.1,555.0 525.5,561.0 542.9,567.0 560.3,573.0 577.7,578.5 595.1,584.0 612.5,589.6 629.9,595.1 647.3,600.6 664.7,606.2 682.2,611.7 699.6,617.2 717.0,622.7 734.4,628.3 751.8,633.8 769.2,638.8 786.6,643.4 804.0,648.0 821.4,652.5 838.8,657.1 856.3,661.7 873.7,666.3 891.1,670.8 908.5,675.4 925.9,680.0 943.3,684.6 960.7,689.1 978.1,693.7 995.5,697.5 1012.9,701.2 1030.4,705.0 1047.8,708.7 1065.2,712.4 1082.6,716.1 1100.0,721.7 1100.0,746.7 1082.6,741.1 1065.2,737.4 1047.8,733.7 1030.4,730.0 1012.9,726.2 995.5,722.5 978.1,718.7 960.7,714.0 943.3,709.4 925.9,704.7 908.5,700.1 891.1,695.4 873.7,690.8 856.3,686.1 838.8,681.5 821.4,676.8 804.0,672.2 786.6,667.5 769.2,662.9 751.8,657.7 734.4,652.0 717.0,646.3 699.6,640.6 682.2,634.9 664.7,629.2 647.3,623.5 629.9,617.8 612.5,612.1 595.1,606.4 577.7,600.7 560.3,595.0 542.9,588.5 525.5,582.0 508.1,575.5 490.6,569.0 473.2,562.5 455.8,556.0 438.4,549.5 421.0,543.0" fill="url(#pFl)" stroke="none" stroke-width="1" />
<polyline points="421.0,543.0 438.4,549.5 455.8,556.0 473.2,562.5 490.6,569.0 508.1,575.5 525.5,582.0 542.9,588.5 560.3,595.0 577.7,600.7 595.1,606.4 612.5,612.1 629.9,617.8 647.3,623.5 664.7,629.2 682.2,634.9 699.6,640.6 717.0,646.3 734.4,652.0 751.8,657.7 769.2,662.9 786.6,667.5 804.0,672.2 821.4,676.8 838.8,681.5 856.3,686.1 873.7,690.8 891.1,695.4 908.5,700.1 925.9,704.7 943.3,709.4 960.7,714.0 978.1,718.7 995.5,722.5 1012.9,726.2 1030.4,730.0 1047.8,733.7 1065.2,737.4 1082.6,741.1 1100.0,746.7" fill="none" stroke="#111" stroke-width="1.3" />
<polyline points="470.0,611.4 490.3,618.2 510.7,625.1 531.0,631.9 551.4,638.8 571.7,645.5 592.1,652.0 612.4,658.5 632.8,665.0 653.1,671.5 673.4,678.1 693.8,684.6 714.1,690.9 734.5,696.5 754.8,702.2 775.2,707.9 795.5,713.5 815.9,719.2 836.2,724.8 856.6,730.5 876.9,736.1 897.2,741.8 917.6,747.4 937.9,753.1 958.3,758.8 978.6,764.4 999.0,767.8 1019.3,770.9 1039.7,774.1 1060.0,777.2" fill="none" stroke="#222" stroke-width="1.3" />
<line x1="455" y1="557.694964028777" x2="455" y2="610.359793814433" stroke="#111" stroke-width="1.6" opacity="0.75"/>
<line x1="487.5" y1="569.8298561151079" x2="487.5" y2="616.2592783505155" stroke="#111" stroke-width="1.6" opacity="0.75"/>
<line x1="519" y1="581.5913669064748" x2="519" y2="626.8783505154639" stroke="#111" stroke-width="1.6" opacity="0.75"/>
<line x1="550" y1="593.1661870503598" x2="550" y2="637.3288659793815" stroke="#111" stroke-width="1.6" opacity="0.75"/>
<line x1="580.7" y1="603.67925" x2="580.7" y2="647.335685483871" stroke="#111" stroke-width="1.6" opacity="0.75"/>
<line x1="613" y1="614.2574999999999" x2="613" y2="657.6899193548387" stroke="#111" stroke-width="1.6" opacity="0.75"/>
<line x1="644.5" y1="624.57375" x2="644.5" y2="667.7877016129032" stroke="#111" stroke-width="1.6" opacity="0.75"/>
<line x1="676" y1="634.89" x2="676" y2="677.8854838709677" stroke="#111" stroke-width="1.6" opacity="0.75"/>
<line x1="708.8" y1="645.6320000000001" x2="708.8" y2="688.4" stroke="#111" stroke-width="1.6" opacity="0.75"/>
<line x1="739.4" y1="655.6535" x2="739.4" y2="696.9075221238938" stroke="#111" stroke-width="1.6" opacity="0.75"/>
<line x1="771" y1="665.3399999999999" x2="771" y2="705.6930678466076" stroke="#111" stroke-width="1.6" opacity="0.75"/>
<line x1="802.7" y1="673.8125454545456" x2="802.7" y2="714.5064159292035" stroke="#111" stroke-width="1.6" opacity="0.75"/>
<line x1="834.3" y1="682.2583636363637" x2="834.3" y2="723.2919616519174" stroke="#111" stroke-width="1.6" opacity="0.75"/>
<line x1="866.9" y1="690.9714545454545" x2="866.9" y2="732.3555309734513" stroke="#111" stroke-width="1.6" opacity="0.75"/>
<line x1="898.5" y1="699.4172727272728" x2="898.5" y2="741.1410766961652" stroke="#111" stroke-width="1.6" opacity="0.75"/>
<line x1="929.2" y1="707.6225454545455" x2="929.2" y2="749.676401179941" stroke="#111" stroke-width="1.6" opacity="0.75"/>
<line x1="961.8" y1="716.3356363636364" x2="961.8" y2="758.7399705014749" stroke="#111" stroke-width="1.6" opacity="0.75"/>
<line x1="993.4" y1="724.0661111111111" x2="993.4" y2="765.8844444444444" stroke="#111" stroke-width="1.6" opacity="0.75"/>
<line x1="1025" y1="730.825" x2="1025" y2="770.8" stroke="#111" stroke-width="1.6" opacity="0.75"/>
<line x1="1055.7" y1="737.3913888888889" x2="1055.7" y2="775.5755555555555" stroke="#111" stroke-width="1.6" opacity="0.75"/>
<polygon points="410.5,619.0 463.0,607.0 463.0,616.0 410.5,629.0" fill="#0a0a0a" stroke="none" stroke-width="1" />
<polygon points="1063.0,745.0 1118.0,738.0 1108.0,780.0 1070.0,784.0" fill="url(#pFl)" stroke="none" stroke-width="1" />
<line x1="1070" y1="780" x2="1101" y2="741" stroke="#000" stroke-width="3.5" />
<polygon points="1065.5,785.1 1125.4,731.0 1245.4,1160.0 1250.0,1195.0 1180.0,1201.0 1170.3,1201.0" fill="url(#pAM3)" stroke="#111" stroke-width="1.2" />
<polygon points="1118.0,760.0 1133.0,757.0 1247.0,1160.0 1232.0,1175.0" fill="url(#pAM3f)" stroke="none" stroke-width="1" />
<polyline points="1110.0,790.0 1226.0,1180.0" fill="none" stroke="#111" stroke-width="1.6" />
<polyline points="1102.0,800.0 1192.0,1080.0" fill="none" stroke="#111" stroke-width="1.0" opacity="0.7"/>
<path d="M1080,787 L1112.6,791" fill="none" stroke="#0a0a0a" stroke-width="3" />
<polygon points="1075.0,792.0 1082.0,786.0 1084.0,795.0" fill="#000" stroke="none" stroke-width="1" />
<polygon points="1157.5,1210.4 1175.0,1200.0 1250.0,1196.0 1265.5,1202.7 1229.8,1232.1" fill="url(#pFl)" stroke="#000" stroke-width="1.2" />
<polygon points="1168.0,1212.0 1170.0,1188.0 1176.0,1186.0 1178.0,1212.0" fill="#000" stroke="none" stroke-width="1" />
<polygon points="1217.0,1205.0 1222.0,1200.0 1225.0,1232.0 1220.0,1232.0" fill="#000" stroke="none" stroke-width="1" />
<polygon points="1234.0,1200.0 1238.0,1172.0 1246.0,1170.0 1248.0,1214.0 1240.0,1218.0" fill="#000" stroke="none" stroke-width="opacity="0.92"" />
<polygon points="1247.0,1180.0 1266.0,1203.0 1250.0,1210.0" fill="#000" stroke="none" stroke-width="opacity="0.8"" />
<line x1="1175" y1="1200" x2="1250" y2="1196" stroke="#000" stroke-width="1.5" />
<polygon points="363.0,531.3 380.4,513.1 408.7,521.3 414.0,517.6 422.3,519.5 421.0,530.0 410.5,628.0 412.7,726.0 428.9,962.6 375.6,965.0 360.3,669.0" fill="url(#pAM1)" stroke="#000" stroke-width="1.2" />
<polygon points="363.0,531.3 380.4,513.1 422.3,519.5 421.0,530.0 405.0,545.0 365.0,545.0" fill="url(#pCap)" stroke="none" stroke-width="1" />
<polygon points="362.0,560.0 378.0,556.0 378.0,600.0 362.0,600.0" fill="#000" stroke="none" stroke-width="1" />
<polygon points="370.0,545.0 405.0,548.0 405.0,560.0 370.0,556.0" fill="#050505" stroke="none" stroke-width="opacity="0.7"" />
<polygon points="371.0,632.0 398.0,630.0 415.0,958.0 381.0,960.0" fill="url(#pAM1b)" stroke="none" stroke-width="1" />
<polygon points="373.0,598.0 395.0,596.0 397.0,618.0 376.0,622.0" fill="url(#pGreen)" stroke="none" stroke-width="1" />
<line x1="372" y1="620" x2="398" y2="626" stroke="#3344cc" stroke-width="2" opacity="0.6"/>
<line x1="712" y1="643" x2="795" y2="665" stroke="#4455dd" stroke-width="2.5" opacity="0.45"/>
<line x1="708" y1="649" x2="780" y2="668" stroke="#3344bb" stroke-width="1.5" opacity="0.35"/>
<polygon points="358.2,978.8 375.6,963.0 428.9,960.6 433.5,974.2 415.0,996.2" fill="url(#pAM1)" stroke="#000" stroke-width="1" />
<polyline points="538.0,642.5 548.9,652.7 564.4,667.5 581.8,683.6 598.0,698.0 612.5,710.1 626.9,721.5 641.0,732.1 655.0,742.0 669.2,751.2 683.6,759.7 697.1,767.2 708.8,773.6 718.1,778.5 725.5,782.1 732.2,785.0 739.4,788.0 747.2,791.1 755.1,793.9 763.1,796.5 771.0,799.0 778.9,801.3 786.8,803.4 794.7,805.3 802.7,807.0 810.5,808.6 818.2,810.1 826.3,811.4 835.3,812.3 845.4,812.9 856.2,813.2 867.6,813.1 879.3,812.3 891.8,810.7 905.0,808.4 917.8,805.8 929.2,803.3 938.7,801.0 946.9,798.6 954.4,796.2 961.8,793.7 969.3,791.1 976.6,788.4 983.5,785.7 990.0,783.0 996.5,780.0 1002.8,776.8 1008.2,774.0 1012.0,772.0" fill="none" stroke="#111" stroke-width="1.4" />
<line x1="550" y1="645.3288659793815" x2="550" y2="653.8336723451139" stroke="#111" stroke-width="1.4" />
<line x1="580.7" y1="655.335685483871" x2="580.7" y2="682.5859111379982" stroke="#111" stroke-width="1.4" />
<line x1="613" y1="665.6899193548387" x2="613" y2="710.445982832022" stroke="#111" stroke-width="1.4" />
<line x1="644.5" y1="675.7877016129032" x2="644.5" y2="734.627063127446" stroke="#111" stroke-width="1.4" />
<line x1="676" y1="685.8854838709677" x2="676" y2="755.239836607664" stroke="#111" stroke-width="1.4" />
<line x1="708.8" y1="696.4" x2="708.8" y2="773.6" stroke="#111" stroke-width="1.4" />
<line x1="739.4" y1="704.9075221238938" x2="739.4" y2="788.0" stroke="#111" stroke-width="1.4" />
<line x1="771" y1="713.6930678466076" x2="771" y2="799.0" stroke="#111" stroke-width="1.4" />
<line x1="802.7" y1="722.5064159292035" x2="802.7" y2="807.0" stroke="#111" stroke-width="1.4" />
<line x1="834.3" y1="731.2919616519174" x2="834.3" y2="812.2106458831114" stroke="#111" stroke-width="1.4" />
<line x1="866.9" y1="740.3555309734513" x2="866.9" y2="813.0492571379067" stroke="#111" stroke-width="1.4" />
<line x1="898.5" y1="749.1410766961652" x2="898.5" y2="809.5634737449509" stroke="#111" stroke-width="1.4" />
<line x1="929.2" y1="757.676401179941" x2="929.2" y2="803.3" stroke="#111" stroke-width="1.4" />
<line x1="961.8" y1="766.7399705014749" x2="961.8" y2="793.7" stroke="#111" stroke-width="1.4" />
<line x1="993.4" y1="773.8844444444444" x2="993.4" y2="781.4563007030827" stroke="#111" stroke-width="1.4" />
<polyline points="339.3,597.5 346.0,631.0 352.0,666.0 361.0,702.0" fill="none" stroke="#111" stroke-width="1.3" />
<line x1="339.3" y1="597.5" x2="362" y2="597.5" stroke="#111" stroke-width="1.3" />
<line x1="345" y1="631.7" x2="361" y2="634.4" stroke="#111" stroke-width="1.3" />
<line x1="351" y1="666" x2="361" y2="667" stroke="#111" stroke-width="1.3" />
<line x1="1135" y1="773" x2="1156.8" y2="779.4" stroke="#111" stroke-width="1.4" />
<line x1="1156.8" y1="779.4" x2="1244.3" y2="1167.4" stroke="#111" stroke-width="1.4" />
<line x1="1141.884" y1="811.3" x2="1163.99345" y2="811.3" stroke="#111" stroke-width="1.4" />
<line x1="1151.096" y1="844.2" x2="1171.4124" y2="844.2" stroke="#111" stroke-width="1.4" />
<line x1="1160.028" y1="876.1" x2="1178.60585" y2="876.1" stroke="#111" stroke-width="1.4" />
<line x1="1168.96" y1="908" x2="1185.7993" y2="908" stroke="#111" stroke-width="1.4" />
<line x1="1177.92" y1="940" x2="1193.0153" y2="940" stroke="#111" stroke-width="1.4" />
<line x1="1187.048" y1="972.6" x2="1200.3666" y2="972.6" stroke="#111" stroke-width="1.4" />
<line x1="1205.3600000000001" y1="1038" x2="1215.1143" y2="1038" stroke="#111" stroke-width="1.4" />
<line x1="1214.488" y1="1070.6" x2="1222.4656" y2="1070.6" stroke="#111" stroke-width="1.4" />
<line x1="1223.5040000000001" y1="1102.8" x2="1229.7267" y2="1102.8" stroke="#111" stroke-width="1.4" />
<line x1="1232.7720000000002" y1="1135.9" x2="1237.19075" y2="1135.9" stroke="#111" stroke-width="1.4" />
<rect x="521" y="423" width="50" height="27" fill="#fff" />
<text x="526.0" y="444.1" font-family="Liberation Sans" font-size="20.35" font-weight="normal" fill="#1a1a1a" textLength="41.0" lengthAdjust="spacingAndGlyphs" >RM5</text>
<rect x="282" y="631" width="49" height="28" fill="#fff" />
<text x="286.4" y="652.7" font-family="Liberation Sans" font-size="20.35" font-weight="normal" fill="#1a1a1a" textLength="41.1" lengthAdjust="spacingAndGlyphs" >RM4</text>
<rect x="402.2" y="692.7" width="45.19999999999999" height="30.199999999999932" fill="#fff" />
<text x="405.3" y="716.0" font-family="Liberation Sans" font-size="20.35" font-weight="normal" fill="#1a1a1a" textLength="40.9" lengthAdjust="spacingAndGlyphs" >AM1</text>
<rect x="1169" y="998.8" width="44.799999999999955" height="28.200000000000045" fill="#fff" />
<text x="1171.6" y="1019.4" font-family="Liberation Sans" font-size="20.35" font-weight="normal" fill="#1a1a1a" textLength="41.2" lengthAdjust="spacingAndGlyphs" >AM3</text>
<rect x="376.2" y="556" width="31.0" height="23.700000000000045" fill="#99c8f7" />
<text x="378.1" y="572.4" font-family="Liberation Sans" font-size="16.86" font-weight="normal" fill="#1a1a1a" textLength="24.7" lengthAdjust="spacingAndGlyphs" >0.0</text>
<rect x="339" y="573.3" width="56" height="23.700000000000045" fill="#99c8f7" />
<text x="341.1" y="590.5" font-family="Liberation Sans" font-size="16.86" font-weight="normal" fill="#1a1a1a" textLength="50.9" lengthAdjust="spacingAndGlyphs" >-338.2</text>
<rect x="770" y="776.5" width="50" height="23.899999999999977" fill="#99c8f7" />
<text x="773.1" y="794.0" font-family="Liberation Sans" font-size="16.86" font-weight="normal" fill="#1a1a1a" textLength="42.9" lengthAdjust="spacingAndGlyphs" >735.6</text>
<rect x="433.5" y="958" width="50.5" height="23.100000000000023" fill="#99c8f7" />
<text x="436.1" y="975.5" font-family="Liberation Sans" font-size="16.86" font-weight="normal" fill="#1a1a1a" textLength="43.9" lengthAdjust="spacingAndGlyphs" >167.6</text>
<rect x="1087.8" y="706.9" width="55.90000000000009" height="23.200000000000045" fill="#99c8f7" />
<text x="1089.6" y="724.0" font-family="Liberation Sans" font-size="16.86" font-weight="normal" fill="#1a1a1a" textLength="50.4" lengthAdjust="spacingAndGlyphs" >-124.1</text>
<rect x="1156.4" y="757" width="56.09999999999991" height="23.299999999999955" fill="#99c8f7" />
<text x="1158.6" y="774.5" font-family="Liberation Sans" font-size="16.86" font-weight="normal" fill="#1a1a1a" textLength="50.4" lengthAdjust="spacingAndGlyphs" >-249.7</text>
<rect x="1776.2" y="262.3" width="99.8" height="37.2" fill="#f0f0f0" />
<text x="1641.1" y="288.7" font-family="Liberation Sans" font-size="19.62" font-weight="normal" fill="#fff" textLength="42.1" lengthAdjust="spacingAndGlyphs" >MNA</text>
<text x="1723.6" y="288.7" font-family="Liberation Sans" font-size="19.62" font-weight="normal" fill="#fff" textLength="32.4" lengthAdjust="spacingAndGlyphs" >LBA</text>
<text x="1795.6" y="288.7" font-family="Liberation Sans" font-size="19.62" font-weight="normal" fill="#f26f21" textLength="60.1" lengthAdjust="spacingAndGlyphs" >GMNIA</text>
<text x="1644.8" y="350.2" font-family="Liberation Sans" font-size="19.62" font-weight="normal" fill="#454545" textLength="115.7" lengthAdjust="spacingAndGlyphs" >Applied loads</text>
<path d="M1779.2,346.5 L1786.7,353.5 L1801.2,335.0" fill="none" stroke="#0a7d0a" stroke-width="4.4" stroke-linejoin="miter"/>
<text x="1818.1" y="350.2" font-family="Liberation Sans" font-size="19.62" font-weight="normal" fill="#454545" textLength="62.4" lengthAdjust="spacingAndGlyphs" >100.0 %</text>
<clipPath id="tclip"><rect x="1640" y="380" width="690" height="960"/></clipPath>
<g clip-path="url(#tclip)">
<rect x="1645.5" y="386.3" width="673.0" height="953.7" fill="#f0f0f0" />
<rect x="1644.75" y="385.55" width="674.5" height="1.5" fill="#b9b9b9" />
<rect x="1689.65" y="386.3" width="1.5" height="56.19999999999999" fill="#b9b9b9" />
<rect x="1763.55" y="386.3" width="1.5" height="56.19999999999999" fill="#b9b9b9" />
<rect x="1967.55" y="386.3" width="1.5" height="56.19999999999999" fill="#b9b9b9" />
<rect x="2035.95" y="386.3" width="1.5" height="56.19999999999999" fill="#b9b9b9" />
<rect x="2105.95" y="386.3" width="1.5" height="56.19999999999999" fill="#b9b9b9" />
<rect x="2225.95" y="386.3" width="1.5" height="56.19999999999999" fill="#b9b9b9" />
<rect x="2315.95" y="386.3" width="1.5" height="56.19999999999999" fill="#b9b9b9" />
<rect x="1644.75" y="441.75" width="674.5" height="1.5" fill="#b9b9b9" />
<text x="1697.1" y="422.0" font-family="Liberation Sans" font-size="19.91" font-weight="bold" fill="#353535" textLength="55.4" lengthAdjust="spacingAndGlyphs" >Status</text>
<text x="1771.1" y="422.0" font-family="Liberation Sans" font-size="19.91" font-weight="bold" fill="#353535" textLength="40.2" lengthAdjust="spacingAndGlyphs" >Item</text>
<text x="1974.9" y="409.5" font-family="Liberation Sans" font-size="19.91" font-weight="bold" fill="#353535" textLength="26.8" lengthAdjust="spacingAndGlyphs" >Th.</text>
<text x="1974.9" y="435.0" font-family="Liberation Sans" font-size="19.91" font-weight="bold" fill="#353535" textLength="48.4" lengthAdjust="spacingAndGlyphs" >[mm]</text>
<text x="2043.8" y="422.0" font-family="Liberation Sans" font-size="19.91" font-weight="bold" fill="#353535" textLength="50.9" lengthAdjust="spacingAndGlyphs" >Loads</text>
<text x="2113.3" y="422.0" font-family="Liberation Sans" font-size="18.00" font-weight="bold" fill="#353535" textLength="11.2" lengthAdjust="spacingAndGlyphs" >σ</text>
<text x="2129.9" y="426.7" font-family="Liberation Sans" font-size="15.99" font-weight="bold" fill="#353535" textLength="17.6" lengthAdjust="spacingAndGlyphs" >Ed</text>
<text x="2161.6" y="422.0" font-family="Liberation Sans" font-size="19.91" font-weight="bold" fill="#353535" textLength="51.7" lengthAdjust="spacingAndGlyphs" >[MPa]</text>
<text x="2233.3" y="422.0" font-family="Liberation Sans" font-size="18.00" font-weight="bold" fill="#353535" textLength="9.7" lengthAdjust="spacingAndGlyphs" >ε</text>
<text x="2247.4" y="426.7" font-family="Liberation Sans" font-size="15.99" font-weight="bold" fill="#353535" textLength="13.4" lengthAdjust="spacingAndGlyphs" >Pl</text>
<text x="2274.1" y="422.0" font-family="Liberation Sans" font-size="19.91" font-weight="bold" fill="#353535" textLength="29.2" lengthAdjust="spacingAndGlyphs" >[%]</text>
<rect x="1644.75" y="442.5" width="1.5" height="96.2" fill="#b9b9b9" />
<rect x="2317.75" y="442.5" width="1.5" height="96.2" fill="#b9b9b9" />
<polygon points="1662.1,462.0 1674.6,462.0 1668.3,471.0" fill="#454545" stroke="none" stroke-width="1" />
<text x="1690.8" y="473.3" font-family="Liberation Sans" font-size="19.91" font-weight="bold" fill="#353535" textLength="41.2" lengthAdjust="spacingAndGlyphs" >AM1</text>
<rect x="1644.75" y="486.75" width="674.5" height="1.5" fill="#b9b9b9" />
<rect x="1689.65" y="487.5" width="1.5" height="51.200000000000045" fill="#b9b9b9" />
<rect x="1763.55" y="487.5" width="1.5" height="51.200000000000045" fill="#b9b9b9" />
<rect x="1967.55" y="487.5" width="1.5" height="51.200000000000045" fill="#b9b9b9" />
<rect x="2035.95" y="487.5" width="1.5" height="51.200000000000045" fill="#b9b9b9" />
<rect x="2105.95" y="487.5" width="1.5" height="51.200000000000045" fill="#b9b9b9" />
<rect x="2225.95" y="487.5" width="1.5" height="51.200000000000045" fill="#b9b9b9" />
<rect x="2315.95" y="487.5" width="1.5" height="51.200000000000045" fill="#b9b9b9" />
<rect x="1644.75" y="537.95" width="674.5" height="1.5" fill="#b9b9b9" />
<path d="M1716.5,516.0 L1724,523.0 L1738.5,504.5" fill="none" stroke="#5cb85c" stroke-width="4.4" stroke-linejoin="miter"/>
<text x="1770.8" y="520.8" font-family="Liberation Sans" font-size="19.91" font-weight="bold" fill="#353535" textLength="142.2" lengthAdjust="spacingAndGlyphs" >Bottom flange 1</text>
<text x="1974.9" y="520.8" font-family="Liberation Sans" font-size="19.91" font-weight="bold" fill="#353535" textLength="20.9" lengthAdjust="spacingAndGlyphs" >18</text>
<text x="2043.3" y="520.8" font-family="Liberation Sans" font-size="19.91" font-weight="bold" fill="#353535" textLength="29.8" lengthAdjust="spacingAndGlyphs" >LE1</text>
<text x="2113.3" y="520.8" font-family="Liberation Sans" font-size="19.91" font-weight="bold" fill="#353535" textLength="49.9" lengthAdjust="spacingAndGlyphs" >357.7</text>
<text x="2233.2" y="520.8" font-family="Liberation Sans" font-size="19.91" font-weight="bold" fill="#353535" textLength="27.9" lengthAdjust="spacingAndGlyphs" >1.3</text>
<rect x="1644.75" y="538.7" width="1.5" height="96.2" fill="#b9b9b9" />
<rect x="2317.75" y="538.7" width="1.5" height="96.2" fill="#b9b9b9" />
<polygon points="1662.1,558.2 1674.6,558.2 1668.3,567.2" fill="#454545" stroke="none" stroke-width="1" />
<text x="1690.8" y="569.5" font-family="Liberation Sans" font-size="19.91" font-weight="bold" fill="#353535" textLength="41.8" lengthAdjust="spacingAndGlyphs" >AM2</text>
<rect x="1644.75" y="582.95" width="674.5" height="1.5" fill="#b9b9b9" />
<rect x="1689.65" y="583.7" width="1.5" height="51.200000000000045" fill="#b9b9b9" />
<rect x="1763.55" y="583.7" width="1.5" height="51.200000000000045" fill="#b9b9b9" />
<rect x="1967.55" y="583.7" width="1.5" height="51.200000000000045" fill="#b9b9b9" />
<rect x="2035.95" y="583.7" width="1.5" height="51.200000000000045" fill="#b9b9b9" />
<rect x="2105.95" y="583.7" width="1.5" height="51.200000000000045" fill="#b9b9b9" />
<rect x="2225.95" y="583.7" width="1.5" height="51.200000000000045" fill="#b9b9b9" />
<rect x="2315.95" y="583.7" width="1.5" height="51.200000000000045" fill="#b9b9b9" />
<rect x="1644.75" y="634.1500000000001" width="674.5" height="1.5" fill="#b9b9b9" />
<path d="M1716.5,612.2 L1724,619.2 L1738.5,600.7" fill="none" stroke="#5cb85c" stroke-width="4.4" stroke-linejoin="miter"/>
<text x="1770.8" y="617.0" font-family="Liberation Sans" font-size="19.91" font-weight="bold" fill="#353535" textLength="55.7" lengthAdjust="spacingAndGlyphs" >Web 1</text>
<text x="1974.9" y="617.0" font-family="Liberation Sans" font-size="19.91" font-weight="bold" fill="#353535" textLength="20.8" lengthAdjust="spacingAndGlyphs" >11</text>
<text x="2043.3" y="617.0" font-family="Liberation Sans" font-size="19.91" font-weight="bold" fill="#353535" textLength="29.8" lengthAdjust="spacingAndGlyphs" >LE1</text>
<text x="2113.3" y="617.0" font-family="Liberation Sans" font-size="19.91" font-weight="bold" fill="#353535" textLength="49.9" lengthAdjust="spacingAndGlyphs" >355.4</text>
<text x="2233.2" y="617.0" font-family="Liberation Sans" font-size="19.91" font-weight="bold" fill="#353535" textLength="27.9" lengthAdjust="spacingAndGlyphs" >0.2</text>
<rect x="1644.75" y="634.9" width="1.5" height="96.2" fill="#b9b9b9" />
<rect x="2317.75" y="634.9" width="1.5" height="96.2" fill="#b9b9b9" />
<polygon points="1662.1,654.4 1674.6,654.4 1668.3,663.4" fill="#454545" stroke="none" stroke-width="1" />
<text x="1690.8" y="665.7" font-family="Liberation Sans" font-size="19.91" font-weight="bold" fill="#353535" textLength="92.4" lengthAdjust="spacingAndGlyphs" >STIFF T1-a</text>
<rect x="1644.75" y="679.15" width="674.5" height="1.5" fill="#b9b9b9" />
<rect x="1689.65" y="679.9" width="1.5" height="51.200000000000045" fill="#b9b9b9" />
<rect x="1763.55" y="679.9" width="1.5" height="51.200000000000045" fill="#b9b9b9" />
<rect x="1967.55" y="679.9" width="1.5" height="51.200000000000045" fill="#b9b9b9" />
<rect x="2035.95" y="679.9" width="1.5" height="51.200000000000045" fill="#b9b9b9" />
<rect x="2105.95" y="679.9" width="1.5" height="51.200000000000045" fill="#b9b9b9" />
<rect x="2225.95" y="679.9" width="1.5" height="51.200000000000045" fill="#b9b9b9" />
<rect x="2315.95" y="679.9" width="1.5" height="51.200000000000045" fill="#b9b9b9" />
<rect x="1644.75" y="730.35" width="674.5" height="1.5" fill="#b9b9b9" />
<path d="M1716.5,708.4 L1724,715.4 L1738.5,696.9" fill="none" stroke="#5cb85c" stroke-width="4.4" stroke-linejoin="miter"/>
<text x="1770.8" y="713.2" font-family="Liberation Sans" font-size="19.91" font-weight="bold" fill="#353535" textLength="188.0" lengthAdjust="spacingAndGlyphs" >Stiffener (STIFF T1-a)</text>
<text x="1974.9" y="713.2" font-family="Liberation Sans" font-size="19.91" font-weight="bold" fill="#353535" textLength="22.6" lengthAdjust="spacingAndGlyphs" >20</text>
<text x="2043.3" y="713.2" font-family="Liberation Sans" font-size="19.91" font-weight="bold" fill="#353535" textLength="29.8" lengthAdjust="spacingAndGlyphs" >LE1</text>
<text x="2113.3" y="713.2" font-family="Liberation Sans" font-size="19.91" font-weight="bold" fill="#353535" textLength="49.9" lengthAdjust="spacingAndGlyphs" >306.0</text>
<text x="2233.2" y="713.2" font-family="Liberation Sans" font-size="19.91" font-weight="bold" fill="#353535" textLength="27.9" lengthAdjust="spacingAndGlyphs" >0.0</text>
<rect x="1644.75" y="731.1" width="1.5" height="96.2" fill="#b9b9b9" />
<rect x="2317.75" y="731.1" width="1.5" height="96.2" fill="#b9b9b9" />
<polygon points="1662.1,750.6 1674.6,750.6 1668.3,759.6" fill="#454545" stroke="none" stroke-width="1" />
<text x="1690.8" y="761.9" font-family="Liberation Sans" font-size="19.91" font-weight="bold" fill="#353535" textLength="94.0" lengthAdjust="spacingAndGlyphs" >STIFF T1-b</text>
<rect x="1644.75" y="775.35" width="674.5" height="1.5" fill="#b9b9b9" />
<rect x="1689.65" y="776.1" width="1.5" height="51.200000000000045" fill="#b9b9b9" />
<rect x="1763.55" y="776.1" width="1.5" height="51.200000000000045" fill="#b9b9b9" />
<rect x="1967.55" y="776.1" width="1.5" height="51.200000000000045" fill="#b9b9b9" />
<rect x="2035.95" y="776.1" width="1.5" height="51.200000000000045" fill="#b9b9b9" />
<rect x="2105.95" y="776.1" width="1.5" height="51.200000000000045" fill="#b9b9b9" />
<rect x="2225.95" y="776.1" width="1.5" height="51.200000000000045" fill="#b9b9b9" />
<rect x="2315.95" y="776.1" width="1.5" height="51.200000000000045" fill="#b9b9b9" />
<rect x="1644.75" y="826.5500000000001" width="674.5" height="1.5" fill="#b9b9b9" />
<path d="M1716.5,804.6 L1724,811.6 L1738.5,793.1" fill="none" stroke="#5cb85c" stroke-width="4.4" stroke-linejoin="miter"/>
<text x="1770.8" y="809.4" font-family="Liberation Sans" font-size="19.91" font-weight="bold" fill="#353535" textLength="188.0" lengthAdjust="spacingAndGlyphs" >Stiffener (STIFF T1-b)</text>
<text x="1974.9" y="809.4" font-family="Liberation Sans" font-size="19.91" font-weight="bold" fill="#353535" textLength="22.6" lengthAdjust="spacingAndGlyphs" >20</text>
<text x="2043.3" y="809.4" font-family="Liberation Sans" font-size="19.91" font-weight="bold" fill="#353535" textLength="29.8" lengthAdjust="spacingAndGlyphs" >LE1</text>
<text x="2113.3" y="809.4" font-family="Liberation Sans" font-size="19.91" font-weight="bold" fill="#353535" textLength="49.9" lengthAdjust="spacingAndGlyphs" >173.1</text>
<text x="2233.2" y="809.4" font-family="Liberation Sans" font-size="19.91" font-weight="bold" fill="#353535" textLength="27.9" lengthAdjust="spacingAndGlyphs" >0.0</text>
<rect x="1644.75" y="827.3" width="1.5" height="96.2" fill="#b9b9b9" />
<rect x="2317.75" y="827.3" width="1.5" height="96.2" fill="#b9b9b9" />
<polygon points="1662.1,846.8 1674.6,846.8 1668.3,855.8" fill="#454545" stroke="none" stroke-width="1" />
<text x="1690.8" y="858.1" font-family="Liberation Sans" font-size="19.91" font-weight="bold" fill="#353535" textLength="92.4" lengthAdjust="spacingAndGlyphs" >STIFF T2-a</text>
<rect x="1644.75" y="871.55" width="674.5" height="1.5" fill="#b9b9b9" />
<rect x="1689.65" y="872.3" width="1.5" height="51.200000000000045" fill="#b9b9b9" />
<rect x="1763.55" y="872.3" width="1.5" height="51.200000000000045" fill="#b9b9b9" />
<rect x="1967.55" y="872.3" width="1.5" height="51.200000000000045" fill="#b9b9b9" />
<rect x="2035.95" y="872.3" width="1.5" height="51.200000000000045" fill="#b9b9b9" />
<rect x="2105.95" y="872.3" width="1.5" height="51.200000000000045" fill="#b9b9b9" />
<rect x="2225.95" y="872.3" width="1.5" height="51.200000000000045" fill="#b9b9b9" />
<rect x="2315.95" y="872.3" width="1.5" height="51.200000000000045" fill="#b9b9b9" />
<rect x="1644.75" y="922.75" width="674.5" height="1.5" fill="#b9b9b9" />
<path d="M1716.5,900.8 L1724,907.8 L1738.5,889.3" fill="none" stroke="#5cb85c" stroke-width="4.4" stroke-linejoin="miter"/>
<text x="1770.8" y="905.6" font-family="Liberation Sans" font-size="19.91" font-weight="bold" fill="#353535" textLength="188.0" lengthAdjust="spacingAndGlyphs" >Stiffener (STIFF T2-a)</text>
<text x="1974.9" y="905.6" font-family="Liberation Sans" font-size="19.91" font-weight="bold" fill="#353535" textLength="22.6" lengthAdjust="spacingAndGlyphs" >20</text>
<text x="2043.3" y="905.6" font-family="Liberation Sans" font-size="19.91" font-weight="bold" fill="#353535" textLength="29.8" lengthAdjust="spacingAndGlyphs" >LE1</text>
<text x="2113.3" y="905.6" font-family="Liberation Sans" font-size="19.91" font-weight="bold" fill="#353535" textLength="49.9" lengthAdjust="spacingAndGlyphs" >266.3</text>
<text x="2233.2" y="905.6" font-family="Liberation Sans" font-size="19.91" font-weight="bold" fill="#353535" textLength="27.9" lengthAdjust="spacingAndGlyphs" >0.0</text>
<rect x="1644.75" y="923.5" width="1.5" height="96.2" fill="#b9b9b9" />
<rect x="2317.75" y="923.5" width="1.5" height="96.2" fill="#b9b9b9" />
<polygon points="1662.1,943.0 1674.6,943.0 1668.3,952.0" fill="#454545" stroke="none" stroke-width="1" />
<text x="1690.8" y="954.3" font-family="Liberation Sans" font-size="19.91" font-weight="bold" fill="#353535" textLength="94.0" lengthAdjust="spacingAndGlyphs" >STIFF T2-b</text>
<rect x="1644.75" y="967.75" width="674.5" height="1.5" fill="#b9b9b9" />
<rect x="1689.65" y="968.5" width="1.5" height="51.200000000000045" fill="#b9b9b9" />
<rect x="1763.55" y="968.5" width="1.5" height="51.200000000000045" fill="#b9b9b9" />
<rect x="1967.55" y="968.5" width="1.5" height="51.200000000000045" fill="#b9b9b9" />
<rect x="2035.95" y="968.5" width="1.5" height="51.200000000000045" fill="#b9b9b9" />
<rect x="2105.95" y="968.5" width="1.5" height="51.200000000000045" fill="#b9b9b9" />
<rect x="2225.95" y="968.5" width="1.5" height="51.200000000000045" fill="#b9b9b9" />
<rect x="2315.95" y="968.5" width="1.5" height="51.200000000000045" fill="#b9b9b9" />
<rect x="1644.75" y="1018.95" width="674.5" height="1.5" fill="#b9b9b9" />
<path d="M1716.5,997.0 L1724,1004.0 L1738.5,985.5" fill="none" stroke="#5cb85c" stroke-width="4.4" stroke-linejoin="miter"/>
<text x="1770.8" y="1001.8" font-family="Liberation Sans" font-size="19.91" font-weight="bold" fill="#353535" textLength="188.0" lengthAdjust="spacingAndGlyphs" >Stiffener (STIFF T2-b)</text>
<text x="1974.9" y="1001.8" font-family="Liberation Sans" font-size="19.91" font-weight="bold" fill="#353535" textLength="22.6" lengthAdjust="spacingAndGlyphs" >20</text>
<text x="2043.3" y="1001.8" font-family="Liberation Sans" font-size="19.91" font-weight="bold" fill="#353535" textLength="29.8" lengthAdjust="spacingAndGlyphs" >LE1</text>
<text x="2113.3" y="1001.8" font-family="Liberation Sans" font-size="19.91" font-weight="bold" fill="#353535" textLength="49.9" lengthAdjust="spacingAndGlyphs" >222.4</text>
<text x="2233.2" y="1001.8" font-family="Liberation Sans" font-size="19.91" font-weight="bold" fill="#353535" textLength="27.9" lengthAdjust="spacingAndGlyphs" >0.0</text>
<rect x="1644.75" y="1019.7" width="1.5" height="96.2" fill="#b9b9b9" />
<rect x="2317.75" y="1019.7" width="1.5" height="96.2" fill="#b9b9b9" />
<polygon points="1662.1,1039.2 1674.6,1039.2 1668.3,1048.2" fill="#454545" stroke="none" stroke-width="1" />
<text x="1690.8" y="1050.5" font-family="Liberation Sans" font-size="19.91" font-weight="bold" fill="#353535" textLength="41.8" lengthAdjust="spacingAndGlyphs" >AM3</text>
<rect x="1644.75" y="1063.95" width="674.5" height="1.5" fill="#b9b9b9" />
<rect x="1689.65" y="1064.7" width="1.5" height="51.200000000000045" fill="#b9b9b9" />
<rect x="1763.55" y="1064.7" width="1.5" height="51.200000000000045" fill="#b9b9b9" />
<rect x="1967.55" y="1064.7" width="1.5" height="51.200000000000045" fill="#b9b9b9" />
<rect x="2035.95" y="1064.7" width="1.5" height="51.200000000000045" fill="#b9b9b9" />
<rect x="2105.95" y="1064.7" width="1.5" height="51.200000000000045" fill="#b9b9b9" />
<rect x="2225.95" y="1064.7" width="1.5" height="51.200000000000045" fill="#b9b9b9" />
<rect x="2315.95" y="1064.7" width="1.5" height="51.200000000000045" fill="#b9b9b9" />
<rect x="1644.75" y="1115.15" width="674.5" height="1.5" fill="#b9b9b9" />
<path d="M1716.5,1093.2 L1724,1100.2 L1738.5,1081.7" fill="none" stroke="#5cb85c" stroke-width="4.4" stroke-linejoin="miter"/>
<text x="1770.8" y="1098.0" font-family="Liberation Sans" font-size="19.91" font-weight="bold" fill="#353535" textLength="142.2" lengthAdjust="spacingAndGlyphs" >Bottom flange 1</text>
<text x="1974.9" y="1098.0" font-family="Liberation Sans" font-size="19.91" font-weight="bold" fill="#353535" textLength="20.9" lengthAdjust="spacingAndGlyphs" >19</text>
<text x="2043.3" y="1098.0" font-family="Liberation Sans" font-size="19.91" font-weight="bold" fill="#353535" textLength="29.8" lengthAdjust="spacingAndGlyphs" >LE1</text>
<text x="2113.3" y="1098.0" font-family="Liberation Sans" font-size="19.91" font-weight="bold" fill="#353535" textLength="49.9" lengthAdjust="spacingAndGlyphs" >355.1</text>
<text x="2233.2" y="1098.0" font-family="Liberation Sans" font-size="19.91" font-weight="bold" fill="#353535" textLength="27.9" lengthAdjust="spacingAndGlyphs" >0.0</text>
<rect x="1644.75" y="1115.9" width="1.5" height="96.2" fill="#b9b9b9" />
<rect x="2317.75" y="1115.9" width="1.5" height="96.2" fill="#b9b9b9" />
<polygon points="1662.1,1135.4 1674.6,1135.4 1668.3,1144.4" fill="#454545" stroke="none" stroke-width="1" />
<text x="1690.8" y="1146.7" font-family="Liberation Sans" font-size="19.91" font-weight="bold" fill="#353535" textLength="40.9" lengthAdjust="spacingAndGlyphs" >RM4</text>
<rect x="1644.75" y="1160.15" width="674.5" height="1.5" fill="#b9b9b9" />
<rect x="1689.65" y="1160.9" width="1.5" height="51.200000000000045" fill="#b9b9b9" />
<rect x="1763.55" y="1160.9" width="1.5" height="51.200000000000045" fill="#b9b9b9" />
<rect x="1967.55" y="1160.9" width="1.5" height="51.200000000000045" fill="#b9b9b9" />
<rect x="2035.95" y="1160.9" width="1.5" height="51.200000000000045" fill="#b9b9b9" />
<rect x="2105.95" y="1160.9" width="1.5" height="51.200000000000045" fill="#b9b9b9" />
<rect x="2225.95" y="1160.9" width="1.5" height="51.200000000000045" fill="#b9b9b9" />
<rect x="2315.95" y="1160.9" width="1.5" height="51.200000000000045" fill="#b9b9b9" />
<rect x="1644.75" y="1211.3500000000001" width="674.5" height="1.5" fill="#b9b9b9" />
<path d="M1716.5,1189.4 L1724,1196.4 L1738.5,1177.9" fill="none" stroke="#5cb85c" stroke-width="4.4" stroke-linejoin="miter"/>
<text x="1770.8" y="1194.2" font-family="Liberation Sans" font-size="19.91" font-weight="bold" fill="#353535" textLength="55.7" lengthAdjust="spacingAndGlyphs" >Web 1</text>
<text x="1974.9" y="1194.2" font-family="Liberation Sans" font-size="19.91" font-weight="bold" fill="#353535" textLength="11.4" lengthAdjust="spacingAndGlyphs" >8</text>
<text x="2043.3" y="1194.2" font-family="Liberation Sans" font-size="19.91" font-weight="bold" fill="#353535" textLength="29.8" lengthAdjust="spacingAndGlyphs" >LE1</text>
<text x="2113.3" y="1194.2" font-family="Liberation Sans" font-size="19.91" font-weight="bold" fill="#353535" textLength="27.9" lengthAdjust="spacingAndGlyphs" >6.6</text>
<text x="2233.2" y="1194.2" font-family="Liberation Sans" font-size="19.91" font-weight="bold" fill="#353535" textLength="27.9" lengthAdjust="spacingAndGlyphs" >0.0</text>
<rect x="1644.75" y="1212.1" width="1.5" height="96.2" fill="#b9b9b9" />
<rect x="2317.75" y="1212.1" width="1.5" height="96.2" fill="#b9b9b9" />
<polygon points="1662.1,1231.6 1674.6,1231.6 1668.3,1240.6" fill="#454545" stroke="none" stroke-width="1" />
<text x="1690.8" y="1242.9" font-family="Liberation Sans" font-size="19.91" font-weight="bold" fill="#353535" textLength="40.9" lengthAdjust="spacingAndGlyphs" >RM5</text>
<rect x="1644.75" y="1256.35" width="674.5" height="1.5" fill="#b9b9b9" />
<rect x="1689.65" y="1257.1" width="1.5" height="51.200000000000045" fill="#b9b9b9" />
<rect x="1763.55" y="1257.1" width="1.5" height="51.200000000000045" fill="#b9b9b9" />
<rect x="1967.55" y="1257.1" width="1.5" height="51.200000000000045" fill="#b9b9b9" />
<rect x="2035.95" y="1257.1" width="1.5" height="51.200000000000045" fill="#b9b9b9" />
<rect x="2105.95" y="1257.1" width="1.5" height="51.200000000000045" fill="#b9b9b9" />
<rect x="2225.95" y="1257.1" width="1.5" height="51.200000000000045" fill="#b9b9b9" />
<rect x="2315.95" y="1257.1" width="1.5" height="51.200000000000045" fill="#b9b9b9" />
<rect x="1644.75" y="1307.55" width="674.5" height="1.5" fill="#b9b9b9" />
<path d="M1716.5,1285.6 L1724,1292.6 L1738.5,1274.1" fill="none" stroke="#5cb85c" stroke-width="4.4" stroke-linejoin="miter"/>
<text x="1770.8" y="1290.4" font-family="Liberation Sans" font-size="19.91" font-weight="bold" fill="#353535" textLength="55.7" lengthAdjust="spacingAndGlyphs" >Web 1</text>
<text x="1974.9" y="1290.4" font-family="Liberation Sans" font-size="19.91" font-weight="bold" fill="#353535" textLength="11.4" lengthAdjust="spacingAndGlyphs" >8</text>
<text x="2043.3" y="1290.4" font-family="Liberation Sans" font-size="19.91" font-weight="bold" fill="#353535" textLength="29.8" lengthAdjust="spacingAndGlyphs" >LE1</text>
<text x="2113.3" y="1290.4" font-family="Liberation Sans" font-size="19.91" font-weight="bold" fill="#353535" textLength="38.9" lengthAdjust="spacingAndGlyphs" >39.8</text>
<text x="2233.2" y="1290.4" font-family="Liberation Sans" font-size="19.91" font-weight="bold" fill="#353535" textLength="27.9" lengthAdjust="spacingAndGlyphs" >0.0</text>
<rect x="1644.75" y="1308.3000000000002" width="1.5" height="96.2" fill="#b9b9b9" />
<rect x="2317.75" y="1308.3000000000002" width="1.5" height="96.2" fill="#b9b9b9" />
<polygon points="1662.1,1327.8 1674.6,1327.8 1668.3,1336.8" fill="#454545" stroke="none" stroke-width="1" />
<text x="1690.8" y="1339.1" font-family="Liberation Sans" font-size="19.91" font-weight="bold" fill="#353535" textLength="49.9" lengthAdjust="spacingAndGlyphs" >CON1</text>
<rect x="1644.75" y="1352.5500000000002" width="674.5" height="1.5" fill="#b9b9b9" />
</g>
<rect x="2340.2" y="370.8" width="25.7" height="969.2" fill="#f0f0f0" />
<rect x="2340.2" y="397" width="25.7" height="655" fill="#c8c8c8" />
<path d="M2347.5,388 L2353,382.5 L2358.5,388" fill="none" stroke="#a0a0a0" stroke-width="1.5" />
<path d="M2347.5,1325 L2353,1330.5 L2358.5,1325" fill="none" stroke="#a0a0a0" stroke-width="1.5" />
</svg>
</body></html>
